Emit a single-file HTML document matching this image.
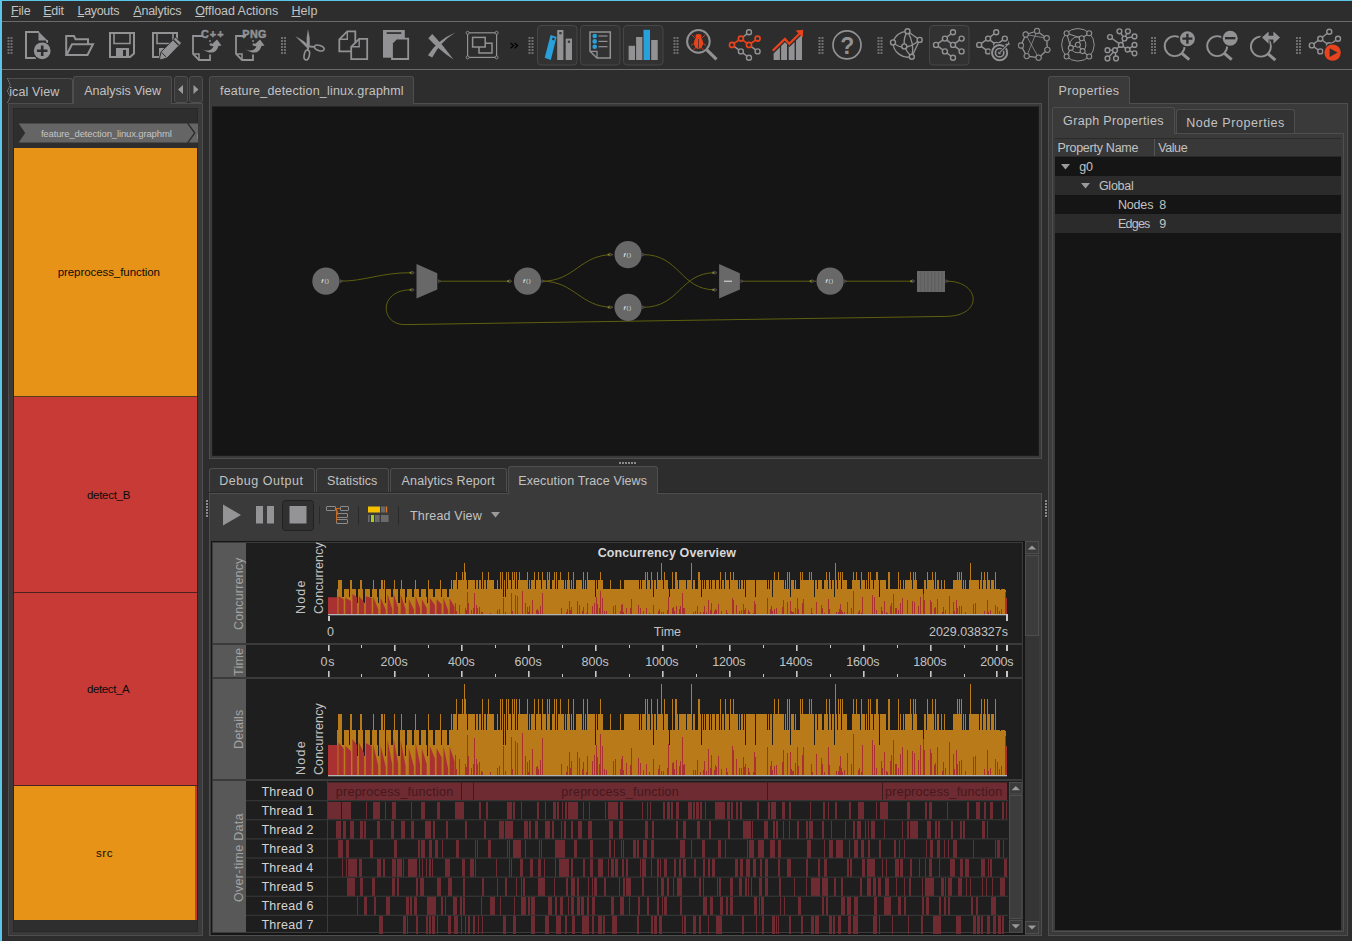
<!DOCTYPE html><html><head><meta charset="utf-8"><title>Flow Graph Analyzer</title><style>
*{box-sizing:border-box}
html,body{margin:0;padding:0}
body{width:1352px;height:941px;overflow:hidden;background:#2d2d2d;font-family:"Liberation Sans",sans-serif;font-size:13px;color:#c2c2c2;position:relative}
.abs{position:absolute}
.t{position:absolute;white-space:nowrap;line-height:16px}
u{text-decoration:underline;text-underline-offset:1px}
.tab{position:absolute;border:1px solid #4e4e4e;border-bottom:none;border-radius:3px 3px 0 0;background:#333333}
.tab.sel{background:#3a3a3a}
.pane{position:absolute;border:1px solid #4e4e4e;background:#3a3a3a}
.dark{position:absolute;background:#151515;border:1px solid #101010}
svg{position:absolute;overflow:visible}
.rot{position:absolute;transform-origin:0 0;transform:rotate(-90deg);white-space:nowrap;line-height:14px}
</style></head><body>
<!-- frame -->

<div class="abs" style="left:0;top:0;width:2px;height:941px;background:#5cc6e8"></div>
<div class="abs" style="left:0;top:0;width:1352px;height:1px;background:#5cc6e8"></div>
<div class="abs" style="left:2px;top:21px;width:1350px;height:1px;background:#6a6a6a"></div>
<div class="abs" style="left:2px;top:69px;width:1350px;height:1px;background:#6a6a6a"></div>

<!-- menubar -->
<div class="t" style="left:11.10px;top:2.67px;font-size:12.5px;letter-spacing:-0.217px;"><u>F</u>ile</div><div class="t" style="left:43.30px;top:2.67px;font-size:12.5px;letter-spacing:-0.275px;"><u>E</u>dit</div><div class="t" style="left:77.50px;top:2.67px;font-size:12.5px;letter-spacing:-0.312px;"><u>L</u>ayouts</div><div class="t" style="left:133.30px;top:2.67px;font-size:12.5px;letter-spacing:-0.228px;"><u>A</u>nalytics</div><div class="t" style="left:195.20px;top:2.67px;font-size:12.5px;letter-spacing:-0.057px;"><u>O</u>ffload Actions</div><div class="t" style="left:291.50px;top:2.67px;font-size:12.5px;letter-spacing:0.050px;"><u>H</u>elp</div>
<!-- toolbar -->
<svg style="left:0;top:0" width="1352" height="941"><rect x="7.5" y="37.0" width="2" height="2" fill="#6e6e6e"/><rect x="10.5" y="37.0" width="2" height="2" fill="#6e6e6e"/><rect x="7.5" y="40.0" width="2" height="2" fill="#6e6e6e"/><rect x="10.5" y="40.0" width="2" height="2" fill="#6e6e6e"/><rect x="7.5" y="43.0" width="2" height="2" fill="#6e6e6e"/><rect x="10.5" y="43.0" width="2" height="2" fill="#6e6e6e"/><rect x="7.5" y="46.0" width="2" height="2" fill="#6e6e6e"/><rect x="10.5" y="46.0" width="2" height="2" fill="#6e6e6e"/><rect x="7.5" y="49.0" width="2" height="2" fill="#6e6e6e"/><rect x="10.5" y="49.0" width="2" height="2" fill="#6e6e6e"/><rect x="7.5" y="52.0" width="2" height="2" fill="#6e6e6e"/><rect x="10.5" y="52.0" width="2" height="2" fill="#6e6e6e"/><rect x="281.0" y="37.0" width="2" height="2" fill="#6e6e6e"/><rect x="284.0" y="37.0" width="2" height="2" fill="#6e6e6e"/><rect x="281.0" y="40.0" width="2" height="2" fill="#6e6e6e"/><rect x="284.0" y="40.0" width="2" height="2" fill="#6e6e6e"/><rect x="281.0" y="43.0" width="2" height="2" fill="#6e6e6e"/><rect x="284.0" y="43.0" width="2" height="2" fill="#6e6e6e"/><rect x="281.0" y="46.0" width="2" height="2" fill="#6e6e6e"/><rect x="284.0" y="46.0" width="2" height="2" fill="#6e6e6e"/><rect x="281.0" y="49.0" width="2" height="2" fill="#6e6e6e"/><rect x="284.0" y="49.0" width="2" height="2" fill="#6e6e6e"/><rect x="281.0" y="52.0" width="2" height="2" fill="#6e6e6e"/><rect x="284.0" y="52.0" width="2" height="2" fill="#6e6e6e"/><rect x="528.5" y="37.0" width="2" height="2" fill="#6e6e6e"/><rect x="531.5" y="37.0" width="2" height="2" fill="#6e6e6e"/><rect x="528.5" y="40.0" width="2" height="2" fill="#6e6e6e"/><rect x="531.5" y="40.0" width="2" height="2" fill="#6e6e6e"/><rect x="528.5" y="43.0" width="2" height="2" fill="#6e6e6e"/><rect x="531.5" y="43.0" width="2" height="2" fill="#6e6e6e"/><rect x="528.5" y="46.0" width="2" height="2" fill="#6e6e6e"/><rect x="531.5" y="46.0" width="2" height="2" fill="#6e6e6e"/><rect x="528.5" y="49.0" width="2" height="2" fill="#6e6e6e"/><rect x="531.5" y="49.0" width="2" height="2" fill="#6e6e6e"/><rect x="528.5" y="52.0" width="2" height="2" fill="#6e6e6e"/><rect x="531.5" y="52.0" width="2" height="2" fill="#6e6e6e"/><rect x="673.5" y="37.0" width="2" height="2" fill="#6e6e6e"/><rect x="676.5" y="37.0" width="2" height="2" fill="#6e6e6e"/><rect x="673.5" y="40.0" width="2" height="2" fill="#6e6e6e"/><rect x="676.5" y="40.0" width="2" height="2" fill="#6e6e6e"/><rect x="673.5" y="43.0" width="2" height="2" fill="#6e6e6e"/><rect x="676.5" y="43.0" width="2" height="2" fill="#6e6e6e"/><rect x="673.5" y="46.0" width="2" height="2" fill="#6e6e6e"/><rect x="676.5" y="46.0" width="2" height="2" fill="#6e6e6e"/><rect x="673.5" y="49.0" width="2" height="2" fill="#6e6e6e"/><rect x="676.5" y="49.0" width="2" height="2" fill="#6e6e6e"/><rect x="673.5" y="52.0" width="2" height="2" fill="#6e6e6e"/><rect x="676.5" y="52.0" width="2" height="2" fill="#6e6e6e"/><rect x="818.5" y="37.0" width="2" height="2" fill="#6e6e6e"/><rect x="821.5" y="37.0" width="2" height="2" fill="#6e6e6e"/><rect x="818.5" y="40.0" width="2" height="2" fill="#6e6e6e"/><rect x="821.5" y="40.0" width="2" height="2" fill="#6e6e6e"/><rect x="818.5" y="43.0" width="2" height="2" fill="#6e6e6e"/><rect x="821.5" y="43.0" width="2" height="2" fill="#6e6e6e"/><rect x="818.5" y="46.0" width="2" height="2" fill="#6e6e6e"/><rect x="821.5" y="46.0" width="2" height="2" fill="#6e6e6e"/><rect x="818.5" y="49.0" width="2" height="2" fill="#6e6e6e"/><rect x="821.5" y="49.0" width="2" height="2" fill="#6e6e6e"/><rect x="818.5" y="52.0" width="2" height="2" fill="#6e6e6e"/><rect x="821.5" y="52.0" width="2" height="2" fill="#6e6e6e"/><rect x="877.5" y="37.0" width="2" height="2" fill="#6e6e6e"/><rect x="880.5" y="37.0" width="2" height="2" fill="#6e6e6e"/><rect x="877.5" y="40.0" width="2" height="2" fill="#6e6e6e"/><rect x="880.5" y="40.0" width="2" height="2" fill="#6e6e6e"/><rect x="877.5" y="43.0" width="2" height="2" fill="#6e6e6e"/><rect x="880.5" y="43.0" width="2" height="2" fill="#6e6e6e"/><rect x="877.5" y="46.0" width="2" height="2" fill="#6e6e6e"/><rect x="880.5" y="46.0" width="2" height="2" fill="#6e6e6e"/><rect x="877.5" y="49.0" width="2" height="2" fill="#6e6e6e"/><rect x="880.5" y="49.0" width="2" height="2" fill="#6e6e6e"/><rect x="877.5" y="52.0" width="2" height="2" fill="#6e6e6e"/><rect x="880.5" y="52.0" width="2" height="2" fill="#6e6e6e"/><rect x="1151.0" y="37.0" width="2" height="2" fill="#6e6e6e"/><rect x="1154.0" y="37.0" width="2" height="2" fill="#6e6e6e"/><rect x="1151.0" y="40.0" width="2" height="2" fill="#6e6e6e"/><rect x="1154.0" y="40.0" width="2" height="2" fill="#6e6e6e"/><rect x="1151.0" y="43.0" width="2" height="2" fill="#6e6e6e"/><rect x="1154.0" y="43.0" width="2" height="2" fill="#6e6e6e"/><rect x="1151.0" y="46.0" width="2" height="2" fill="#6e6e6e"/><rect x="1154.0" y="46.0" width="2" height="2" fill="#6e6e6e"/><rect x="1151.0" y="49.0" width="2" height="2" fill="#6e6e6e"/><rect x="1154.0" y="49.0" width="2" height="2" fill="#6e6e6e"/><rect x="1151.0" y="52.0" width="2" height="2" fill="#6e6e6e"/><rect x="1154.0" y="52.0" width="2" height="2" fill="#6e6e6e"/><rect x="1296.0" y="37.0" width="2" height="2" fill="#6e6e6e"/><rect x="1299.0" y="37.0" width="2" height="2" fill="#6e6e6e"/><rect x="1296.0" y="40.0" width="2" height="2" fill="#6e6e6e"/><rect x="1299.0" y="40.0" width="2" height="2" fill="#6e6e6e"/><rect x="1296.0" y="43.0" width="2" height="2" fill="#6e6e6e"/><rect x="1299.0" y="43.0" width="2" height="2" fill="#6e6e6e"/><rect x="1296.0" y="46.0" width="2" height="2" fill="#6e6e6e"/><rect x="1299.0" y="46.0" width="2" height="2" fill="#6e6e6e"/><rect x="1296.0" y="49.0" width="2" height="2" fill="#6e6e6e"/><rect x="1299.0" y="49.0" width="2" height="2" fill="#6e6e6e"/><rect x="1296.0" y="52.0" width="2" height="2" fill="#6e6e6e"/><rect x="1299.0" y="52.0" width="2" height="2" fill="#6e6e6e"/><path d="M39,32 H26 V58 H36 M47,40 V43" fill="none" stroke="#929295" stroke-width="2" stroke-linejoin="miter"/><path d="M38.5,31.5 L47.5,40.5 H38.5 Z" fill="#929295"/><circle cx="42.2" cy="50.8" r="9.6" fill="#2d2d2d"/><circle cx="42.2" cy="50.8" r="8.4" fill="#929295"/><path d="M42.2,45.5 V56.1 M36.9,50.8 H47.5" stroke="#2d2d2d" stroke-width="2.6" fill="none"/><path d="M66.2,55 V36 H74 L75.5,39.2 H88 V44" fill="none" stroke="#929295" stroke-width="2"/><path d="M66.5,55 L72,44.2 H93 L87.5,55 Z" fill="none" stroke="#929295" stroke-width="2"/><path d="M110,33 H134 V53.5 L130,57 H110 Z" fill="none" stroke="#929295" stroke-width="2"/><path d="M114,33 V43.5 H130 V33" fill="none" stroke="#929295" stroke-width="1.6"/><rect x="116" y="48" width="13" height="9" fill="#929295"/><rect x="123" y="50" width="3" height="6" fill="#2d2d2d"/><g clip-path="url(#csa)"><path d="M153,33 H177 V53.5 L173,57 H153 Z" fill="none" stroke="#929295" stroke-width="2"/><path d="M157,33 V43.5 H173 V33" fill="none" stroke="#929295" stroke-width="1.6"/><rect x="159" y="48" width="13" height="9" fill="#929295"/><rect x="166" y="50" width="3" height="6" fill="#2d2d2d"/></g><defs><clipPath id="csa"><path d="M150,30 H182 V36 L158,60 H150 Z M172,62 L182,50 V62 Z"/></clipPath></defs><path d="M159.6,58.2 L161,52 L175.5,37.2 L181.6,43 L167,58 L160.4,60 Z" fill="#929295" stroke="#2d2d2d" stroke-width="1"/><path d="M173.5,40 L178.5,45" stroke="#2d2d2d" stroke-width="1.2"/><path d="M161.6,52.5 L166,56.8" stroke="#2d2d2d" stroke-width="1"/><path d="M203,36 H193 V54 L199,60 H210 V54.5" fill="none" stroke="#929295" stroke-width="1.8"/><path d="M193,54 H199 V60" fill="none" stroke="#929295" stroke-width="1.5"/><path d="M202.0,49 Q210.0,53 213.5,46.5 L210.5,45.5 L217.0,39.5 L221.5,45.5 L218.5,46 Q215.0,57.5 202.0,49 Z" fill="#929295"/><circle cx="210.0" cy="41" r="0.9" fill="#929295"/><circle cx="210.8" cy="44.5" r="1.2" fill="#929295"/><text x="224.6" y="37.6" font-family="Liberation Sans, sans-serif" font-weight="bold" font-size="10.8" letter-spacing="1.1" fill="#929295" stroke="#929295" stroke-width="0.45" text-anchor="end">C++</text><path d="M246,36 H236 V54 L242,60 H253 V54.5" fill="none" stroke="#929295" stroke-width="1.8"/><path d="M236,54 H242 V60" fill="none" stroke="#929295" stroke-width="1.5"/><path d="M245.0,49 Q253.0,53 256.5,46.5 L253.5,45.5 L260.0,39.5 L264.5,45.5 L261.5,46 Q258.0,57.5 245.0,49 Z" fill="#929295"/><circle cx="253.0" cy="41" r="0.9" fill="#929295"/><circle cx="253.8" cy="44.5" r="1.2" fill="#929295"/><text x="266.9" y="37.6" font-family="Liberation Sans, sans-serif" font-weight="bold" font-size="10.8" letter-spacing="0.4" fill="#929295" stroke="#929295" stroke-width="0.45" text-anchor="end">PNG</text><path d="M308,29 Q310.5,38 309.8,47.5 L306.8,47 Q305.8,38 308,29 Z" fill="#929295"/><path d="M295.3,36.2 Q303,39.5 310,46.8 L307.6,48.4 Q301,42 295.3,36.2 Z" fill="#929295"/><ellipse cx="306.8" cy="55" rx="2.6" ry="5" transform="rotate(12 306.8 55)" fill="none" stroke="#929295" stroke-width="1.6"/><ellipse cx="319.3" cy="48" rx="5" ry="2.6" transform="rotate(18 319.3 48)" fill="none" stroke="#929295" stroke-width="1.6"/><path d="M308.3,47 L307.6,50.5 M310,46.5 L314.5,46.8" stroke="#929295" stroke-width="1.8"/><path d="M347.3,31.3 H355.3 V51.3 H339.3 V39.3 Z" fill="#2d2d2d" stroke="#929295" stroke-width="1.8"/><path d="M347.3,31.3 V39.3 H339.3" fill="none" stroke="#929295" stroke-width="1.4"/><path d="M359.2,38.8 H367.2 V59.1 H351.2 V46.8 Z" fill="#2d2d2d" stroke="#929295" stroke-width="1.8"/><path d="M359.2,38.8 V46.8 H351.2" fill="none" stroke="#929295" stroke-width="1.4"/><rect x="383" y="30" width="21.8" height="27.7" fill="#929295"/><rect x="386.7" y="32.2" width="14.6" height="1.7" fill="#2d2d2d"/><path d="M397.5,38.6 H408.2 V59 H392 V44 Z" fill="#2d2d2d" stroke="#929295" stroke-width="1.8"/><path d="M397.5,38.6 V44 H392 Z" fill="#2d2d2d"/><path d="M391,38 H398 L391,45 Z" fill="#929295"/><path d="M428.3,38.3 L432.3,34 Q444,46 453.5,59.6 Q439,50 428.3,38.3 Z" fill="#929295"/><path d="M428,55.3 L432.2,57.6 Q440,42 455.3,32.4 Q437,40 428,55.3 Z" fill="#929295"/><rect x="467.6" y="32.8" width="29" height="24.6" fill="none" stroke="#929295" stroke-width="1.2"/><circle cx="467.6" cy="32.8" r="1.5" fill="#2d2d2d" stroke="#929295" stroke-width="0.9"/><circle cx="496.6" cy="32.8" r="1.5" fill="#2d2d2d" stroke="#929295" stroke-width="0.9"/><circle cx="467.6" cy="57.4" r="1.5" fill="#2d2d2d" stroke="#929295" stroke-width="0.9"/><circle cx="496.6" cy="57.4" r="1.5" fill="#2d2d2d" stroke="#929295" stroke-width="0.9"/><rect x="479" y="43.2" width="13" height="9.8" fill="none" stroke="#929295" stroke-width="1.5"/><rect x="472.6" y="37.4" width="12.6" height="9.6" fill="#2d2d2d" stroke="#929295" stroke-width="1.5"/><path d="M510.6,43 l3,2.6 l-3,2.6 M514.6,43 l3,2.6 l-3,2.6" fill="none" stroke="#000" stroke-width="1.3"/><rect x="537.5" y="25.5" width="39.5" height="39.5" rx="3.5" fill="#323232" stroke="#474747"/><rect x="580.5" y="25.5" width="39.5" height="39.5" rx="3.5" fill="#323232" stroke="#474747"/><rect x="623.5" y="25.5" width="39.5" height="39.5" rx="3.5" fill="#323232" stroke="#474747"/><path d="M550.6,35 L556.6,36.9 L550.8,60 L544.7,57.8 Z" fill="#27a0dc"/><rect x="552.2" y="37.8" width="2.4" height="2.4" fill="#2a3a44" transform="rotate(15 553.4 39)"/><rect x="557.2" y="30" width="6.2" height="30" fill="#929295"/><rect x="559.3" y="32" width="2.3" height="2.3" fill="#3a3a3a"/><rect x="565.7" y="38.6" width="6.3" height="21.4" fill="#929295"/><rect x="567.8" y="40.6" width="2.3" height="2.3" fill="#3a3a3a"/><path d="M590,32 H610.3 V58 H597 L590,51.3 Z" fill="none" stroke="#929295" stroke-width="1.5"/><path d="M590,51.3 H597 V58" fill="none" stroke="#929295" stroke-width="1.3"/><circle cx="594.7" cy="36.0" r="2.3" fill="#27a0dc"/><rect x="598.5" y="35.4" width="9" height="1.2" fill="#929295"/><circle cx="594.7" cy="41.4" r="2.3" fill="#27a0dc"/><rect x="598.5" y="40.8" width="9" height="1.2" fill="#929295"/><circle cx="594.7" cy="46.7" r="2.3" fill="#27a0dc"/><rect x="598.5" y="46.1" width="9" height="1.2" fill="#929295"/><rect x="628.6" y="45.8" width="6.4" height="14.2" fill="#929295"/><rect x="636.1" y="37" width="6.3" height="23" fill="#929295"/><rect x="643.5" y="29.8" width="6.5" height="30.2" fill="#27a0dc"/><rect x="651.2" y="40" width="6.5" height="20" fill="#929295"/><circle cx="698.4" cy="41.4" r="11.3" fill="none" stroke="#929295" stroke-width="2"/><path d="M706.8,49.8 L716.5,59.3" stroke="#929295" stroke-width="3.2"/><ellipse cx="698.5" cy="43" rx="4.6" ry="6" fill="#e8431c"/><ellipse cx="698.5" cy="36.2" rx="3" ry="2.2" fill="#e8431c"/><rect x="698.2" y="39" width="0.7" height="9.5" fill="#2d2d2d"/><path d="M695.5,38.5 L691.5,34.5 M701.5,38.5 L705.5,34.5 M694.5,43 L691,45.5 M702.5,43 L706,45.5 M695.5,47.5 L693,51 M701.5,47.5 L704,51" stroke="#e8431c" stroke-width="0.8" fill="none"/><path d="M749.0,32.2 L740.9,38.6" stroke="#929295" stroke-width="1.4"/><path d="M740.9,38.6 L732.0,44.9" stroke="#e8431c" stroke-width="1.7"/><path d="M732.0,44.9 L740.9,51.4" stroke="#929295" stroke-width="1.4"/><path d="M740.9,51.4 L749.0,57.7" stroke="#929295" stroke-width="1.4"/><path d="M740.9,38.6 L749.0,44.9" stroke="#e8431c" stroke-width="1.7"/><path d="M749.0,44.9 L757.6,38.6" stroke="#e8431c" stroke-width="1.7"/><path d="M749.0,44.9 L757.6,51.4" stroke="#929295" stroke-width="1.4"/><circle cx="749.0" cy="32.2" r="2.5" fill="#2d2d2d" stroke="#929295" stroke-width="1.4"/><circle cx="740.9" cy="38.6" r="2.5" fill="#2d2d2d" stroke="#e8431c" stroke-width="1.7"/><circle cx="757.6" cy="38.6" r="2.5" fill="#2d2d2d" stroke="#e8431c" stroke-width="1.7"/><circle cx="732.0" cy="44.9" r="2.5" fill="#2d2d2d" stroke="#e8431c" stroke-width="1.7"/><circle cx="749.0" cy="44.9" r="2.5" fill="#2d2d2d" stroke="#e8431c" stroke-width="1.7"/><circle cx="740.9" cy="51.4" r="2.5" fill="#2d2d2d" stroke="#929295" stroke-width="1.4"/><circle cx="757.6" cy="51.4" r="2.5" fill="#2d2d2d" stroke="#929295" stroke-width="1.4"/><circle cx="749.0" cy="57.7" r="2.5" fill="#2d2d2d" stroke="#929295" stroke-width="1.4"/><path d="M773.6,53.5 L779.9,47.3 V60 H773.6 Z M781.1,46 L785,42.3 L787,44.3 V60 H781.1 Z M788.7,46 L789.5,47 L794.6,42 V60 H788.7 Z M796,40.5 L802,34.5 V60 H796 Z" fill="#929295"/><path d="M772.7,50.8 L784.9,38.9 L789.3,43.9 L799.5,33.7" fill="none" stroke="#e8431c" stroke-width="2.3"/><path d="M803.2,29.8 L795.6,30.4 L802.8,37.4 Z" fill="#e8431c"/><circle cx="847" cy="44.9" r="14" fill="none" stroke="#929295" stroke-width="1.7"/><text x="847.2" y="53.8" font-family="Liberation Sans, sans-serif" font-weight="bold" font-size="23" fill="#929295" text-anchor="middle">?</text><g fill="none" stroke="#929295" stroke-width="1.3"><path d="M907.5,31.3 A14.5,14.5 0 0 0 893,42.4 A15,15 0 0 0 911.8,56.7"/><path d="M907.5,31.3 L919.7,39.9 L911.8,56.7"/><path d="M907.5,31.3 Q899,45 911.8,56.7"/><path d="M907.5,31.3 Q915,44 911.8,56.7"/><path d="M893,42.4 Q904,53 919.7,39.9"/></g><circle cx="907.5" cy="31.3" r="2.5" fill="#2d2d2d" stroke="#929295" stroke-width="1.4"/><circle cx="893.0" cy="42.4" r="2.5" fill="#2d2d2d" stroke="#929295" stroke-width="1.4"/><circle cx="919.7" cy="39.9" r="2.5" fill="#2d2d2d" stroke="#929295" stroke-width="1.4"/><circle cx="904.3" cy="46.4" r="2.5" fill="#2d2d2d" stroke="#929295" stroke-width="1.4"/><circle cx="911.8" cy="56.7" r="2.5" fill="#2d2d2d" stroke="#929295" stroke-width="1.4"/><rect x="929.5" y="25.5" width="39.5" height="39.5" rx="3.5" fill="#323232" stroke="#474747"/><path d="M953.0,32.2 L944.9,38.6" stroke="#929295" stroke-width="1.4"/><path d="M944.9,38.6 L936.0,44.9" stroke="#929295" stroke-width="1.4"/><path d="M936.0,44.9 L944.9,51.4" stroke="#929295" stroke-width="1.4"/><path d="M944.9,51.4 L953.0,57.7" stroke="#929295" stroke-width="1.4"/><path d="M944.9,38.6 L953.0,44.9" stroke="#929295" stroke-width="1.4"/><path d="M953.0,44.9 L961.6,38.6" stroke="#929295" stroke-width="1.4"/><path d="M953.0,44.9 L961.6,51.4" stroke="#929295" stroke-width="1.4"/><circle cx="953.0" cy="32.2" r="2.5" fill="#2d2d2d" stroke="#929295" stroke-width="1.4"/><circle cx="944.9" cy="38.6" r="2.5" fill="#2d2d2d" stroke="#929295" stroke-width="1.4"/><circle cx="961.6" cy="38.6" r="2.5" fill="#2d2d2d" stroke="#929295" stroke-width="1.4"/><circle cx="936.0" cy="44.9" r="2.5" fill="#2d2d2d" stroke="#929295" stroke-width="1.4"/><circle cx="953.0" cy="44.9" r="2.5" fill="#2d2d2d" stroke="#929295" stroke-width="1.4"/><circle cx="944.9" cy="51.4" r="2.5" fill="#2d2d2d" stroke="#929295" stroke-width="1.4"/><circle cx="961.6" cy="51.4" r="2.5" fill="#2d2d2d" stroke="#929295" stroke-width="1.4"/><circle cx="953.0" cy="57.7" r="2.5" fill="#2d2d2d" stroke="#929295" stroke-width="1.4"/><path d="M996.2,32.2 L988.1,38.6" stroke="#929295" stroke-width="1.4"/><path d="M988.1,38.6 L979.2,44.9" stroke="#929295" stroke-width="1.4"/><path d="M979.2,44.9 L988.1,51.4" stroke="#929295" stroke-width="1.4"/><path d="M988.1,38.6 L996.2,44.9" stroke="#929295" stroke-width="1.4"/><path d="M996.2,44.9 L1004.8,38.6" stroke="#929295" stroke-width="1.4"/><circle cx="996.2" cy="32.2" r="2.5" fill="#2d2d2d" stroke="#929295" stroke-width="1.4"/><circle cx="988.1" cy="38.6" r="2.5" fill="#2d2d2d" stroke="#929295" stroke-width="1.4"/><circle cx="1004.8" cy="38.6" r="2.5" fill="#2d2d2d" stroke="#929295" stroke-width="1.4"/><circle cx="979.2" cy="44.9" r="2.5" fill="#2d2d2d" stroke="#929295" stroke-width="1.4"/><circle cx="996.2" cy="44.9" r="2.5" fill="#2d2d2d" stroke="#929295" stroke-width="1.4"/><circle cx="988.1" cy="51.4" r="2.5" fill="#2d2d2d" stroke="#929295" stroke-width="1.4"/><circle cx="999.6" cy="52.7" r="9.6" fill="#2d2d2d"/><circle cx="999.6" cy="52.7" r="7.6" fill="none" stroke="#929295" stroke-width="2"/><circle cx="999.6" cy="52.7" r="4.2" fill="none" stroke="#929295" stroke-width="1.7"/><circle cx="999.6" cy="52.7" r="1.5" fill="#929295"/><path d="M999.6,52.7 L1007,45.3" stroke="#2d2d2d" stroke-width="2.6"/><path d="M999.6,52.7 L1007,45.3" stroke="#929295" stroke-width="1.2"/><path d="M1005,44 l3.2,-0.6 l-0.2,-3 l2,3.8 l-3.6,1.8 z" fill="#929295"/><path d="M1037.0,31.0 L1025.7,34.5" stroke="#929295" stroke-width="1.3"/><path d="M1025.7,34.5 L1021.0,45.5" stroke="#929295" stroke-width="1.3"/><path d="M1021.0,45.5 L1026.7,56.1" stroke="#929295" stroke-width="1.3"/><path d="M1026.7,56.1 L1038.6,57.7" stroke="#929295" stroke-width="1.3"/><path d="M1038.6,57.7 L1047.4,49.8" stroke="#929295" stroke-width="1.3"/><path d="M1047.4,49.8 L1046.7,38.2" stroke="#929295" stroke-width="1.3"/><path d="M1046.7,38.2 L1037.0,31.0" stroke="#929295" stroke-width="1.3"/><circle cx="1037.0" cy="31.0" r="2.5" fill="#2d2d2d" stroke="#929295" stroke-width="1.3"/><circle cx="1025.7" cy="34.5" r="2.5" fill="#2d2d2d" stroke="#929295" stroke-width="1.3"/><circle cx="1046.7" cy="38.2" r="2.5" fill="#2d2d2d" stroke="#929295" stroke-width="1.3"/><circle cx="1021.0" cy="45.5" r="2.5" fill="#2d2d2d" stroke="#929295" stroke-width="1.3"/><circle cx="1047.4" cy="49.8" r="2.5" fill="#2d2d2d" stroke="#929295" stroke-width="1.3"/><circle cx="1026.7" cy="56.1" r="2.5" fill="#2d2d2d" stroke="#929295" stroke-width="1.3"/><circle cx="1038.6" cy="57.7" r="2.5" fill="#2d2d2d" stroke="#929295" stroke-width="1.3"/><path d="M1025.7,34.5 L1038.6,57.7" stroke="#929295" stroke-width="0.8"/><path d="M1037.0,31.0 L1026.7,56.1" stroke="#929295" stroke-width="0.8"/><path d="M1025.7,34.5 L1046.7,38.2" stroke="#929295" stroke-width="0.8"/><circle cx="1037.0" cy="31.0" r="2.5" fill="#2d2d2d" stroke="#929295" stroke-width="0.8"/><circle cx="1025.7" cy="34.5" r="2.5" fill="#2d2d2d" stroke="#929295" stroke-width="0.8"/><circle cx="1046.7" cy="38.2" r="2.5" fill="#2d2d2d" stroke="#929295" stroke-width="0.8"/><circle cx="1021.0" cy="45.5" r="2.5" fill="#2d2d2d" stroke="#929295" stroke-width="0.8"/><circle cx="1047.4" cy="49.8" r="2.5" fill="#2d2d2d" stroke="#929295" stroke-width="0.8"/><circle cx="1026.7" cy="56.1" r="2.5" fill="#2d2d2d" stroke="#929295" stroke-width="0.8"/><circle cx="1038.6" cy="57.7" r="2.5" fill="#2d2d2d" stroke="#929295" stroke-width="0.8"/><circle cx="1077.9" cy="44.8" r="16.3" fill="none" stroke="#929295" stroke-width="1"/><circle cx="1077.9" cy="44.8" r="8" fill="none" stroke="#929295" stroke-width="1"/><path d="M1077.9,44.8 L1081.7,38.2" stroke="#929295" stroke-width="1.1"/><path d="M1077.9,44.8 L1070.8,47.9" stroke="#929295" stroke-width="1.1"/><path d="M1077.9,44.8 L1082.6,51.1" stroke="#929295" stroke-width="1.1"/><path d="M1066.6,33.2 L1081.7,38.2" stroke="#929295" stroke-width="1.1"/><path d="M1066.6,33.2 L1070.8,47.9" stroke="#929295" stroke-width="1.1"/><path d="M1081.7,38.2 L1089.2,33.2" stroke="#929295" stroke-width="1.1"/><path d="M1070.8,47.9 L1066.6,56.5" stroke="#929295" stroke-width="1.1"/><path d="M1082.6,51.1 L1089.2,56.5" stroke="#929295" stroke-width="1.1"/><circle cx="1066.6" cy="33.2" r="2.5" fill="#2d2d2d" stroke="#929295" stroke-width="1.1"/><circle cx="1089.2" cy="33.2" r="2.5" fill="#2d2d2d" stroke="#929295" stroke-width="1.1"/><circle cx="1081.7" cy="38.2" r="2.5" fill="#2d2d2d" stroke="#929295" stroke-width="1.1"/><circle cx="1077.9" cy="44.8" r="2.5" fill="#2d2d2d" stroke="#929295" stroke-width="1.1"/><circle cx="1070.8" cy="47.9" r="2.5" fill="#2d2d2d" stroke="#929295" stroke-width="1.1"/><circle cx="1082.6" cy="51.1" r="2.5" fill="#2d2d2d" stroke="#929295" stroke-width="1.1"/><circle cx="1066.6" cy="56.5" r="2.5" fill="#2d2d2d" stroke="#929295" stroke-width="1.1"/><circle cx="1089.2" cy="56.5" r="2.5" fill="#2d2d2d" stroke="#929295" stroke-width="1.1"/><path d="M1120.9,44.9 L1110.0,37.0" stroke="#929295" stroke-width="1.4"/><path d="M1120.9,44.9 L1124.5,38.5" stroke="#929295" stroke-width="1.4"/><path d="M1124.5,38.5 L1119.4,31.3" stroke="#929295" stroke-width="1.4"/><path d="M1124.5,38.5 L1127.9,31.3" stroke="#929295" stroke-width="1.4"/><path d="M1124.5,38.5 L1134.5,36.4" stroke="#929295" stroke-width="1.4"/><path d="M1120.9,44.9 L1127.6,49.6" stroke="#929295" stroke-width="1.4"/><path d="M1127.6,49.6 L1134.5,44.9" stroke="#929295" stroke-width="1.4"/><path d="M1127.6,49.6 L1134.5,53.3" stroke="#929295" stroke-width="1.4"/><path d="M1120.9,44.9 L1115.0,50.2" stroke="#929295" stroke-width="1.4"/><path d="M1115.0,50.2 L1107.5,50.2" stroke="#929295" stroke-width="1.4"/><path d="M1115.0,50.2 L1107.5,58.4" stroke="#929295" stroke-width="1.4"/><path d="M1115.0,50.2 L1116.0,58.4" stroke="#929295" stroke-width="1.4"/><circle cx="1120.9" cy="44.9" r="2.4" fill="#2d2d2d" stroke="#929295" stroke-width="1.4"/><circle cx="1110.0" cy="37.0" r="2.4" fill="#2d2d2d" stroke="#929295" stroke-width="1.4"/><circle cx="1124.5" cy="38.5" r="2.4" fill="#2d2d2d" stroke="#929295" stroke-width="1.4"/><circle cx="1119.4" cy="31.3" r="2.4" fill="#2d2d2d" stroke="#929295" stroke-width="1.4"/><circle cx="1127.9" cy="31.3" r="2.4" fill="#2d2d2d" stroke="#929295" stroke-width="1.4"/><circle cx="1134.5" cy="36.4" r="2.4" fill="#2d2d2d" stroke="#929295" stroke-width="1.4"/><circle cx="1127.6" cy="49.6" r="2.4" fill="#2d2d2d" stroke="#929295" stroke-width="1.4"/><circle cx="1134.5" cy="44.9" r="2.4" fill="#2d2d2d" stroke="#929295" stroke-width="1.4"/><circle cx="1134.5" cy="53.3" r="2.4" fill="#2d2d2d" stroke="#929295" stroke-width="1.4"/><circle cx="1115.0" cy="50.2" r="2.4" fill="#2d2d2d" stroke="#929295" stroke-width="1.4"/><circle cx="1107.5" cy="50.2" r="2.4" fill="#2d2d2d" stroke="#929295" stroke-width="1.4"/><circle cx="1107.5" cy="58.4" r="2.4" fill="#2d2d2d" stroke="#929295" stroke-width="1.4"/><circle cx="1116.0" cy="58.4" r="2.4" fill="#2d2d2d" stroke="#929295" stroke-width="1.4"/><circle cx="1174.7" cy="46.1" r="10" fill="none" stroke="#929295" stroke-width="1.9"/><path d="M1181.9,53.3 L1189.2,59.6" stroke="#929295" stroke-width="3"/><circle cx="1187.4" cy="38.7" r="9" fill="#2d2d2d"/><circle cx="1187.4" cy="38.7" r="7.5" fill="#929295"/><path d="M1187.4,33.7 V43.7 M1182.4,38.7 H1192.4" stroke="#2d2d2d" stroke-width="2.3"/><circle cx="1217.2" cy="46.1" r="10" fill="none" stroke="#929295" stroke-width="1.9"/><path d="M1224.4,53.3 L1231.7,59.6" stroke="#929295" stroke-width="3"/><circle cx="1230.2" cy="38.2" r="9" fill="#2d2d2d"/><circle cx="1230.2" cy="38.2" r="7.5" fill="#929295"/><path d="M1225,38.2 H1235.4" stroke="#2d2d2d" stroke-width="2.3"/><circle cx="1260.9" cy="46.6" r="10" fill="none" stroke="#929295" stroke-width="1.9"/><path d="M1268.1,53.8 L1275.4,60.1" stroke="#929295" stroke-width="3"/><path d="M1259.5,37.6 L1269.5,29 V46.5 Z M1282.5,37.6 L1272.5,29 V46.5 Z" fill="#2d2d2d"/><path d="M1262,37.6 L1268.6,31.4 V35.8 H1273.4 V31.4 L1280,37.6 L1273.4,43.8 V39.6 H1268.6 V43.8 Z" fill="#929295"/><path d="M1329.3,31.7 L1320.3,38.7" stroke="#929295" stroke-width="1.4"/><path d="M1320.3,38.7 L1311.8,45.4" stroke="#929295" stroke-width="1.4"/><path d="M1311.8,45.4 L1320.3,51.4" stroke="#929295" stroke-width="1.4"/><path d="M1320.3,38.7 L1329.0,45.2" stroke="#929295" stroke-width="1.4"/><path d="M1329.0,45.2 L1338.0,38.7" stroke="#929295" stroke-width="1.4"/><circle cx="1329.3" cy="31.7" r="2.5" fill="#2d2d2d" stroke="#929295" stroke-width="1.4"/><circle cx="1320.3" cy="38.7" r="2.5" fill="#2d2d2d" stroke="#929295" stroke-width="1.4"/><circle cx="1338.0" cy="38.7" r="2.5" fill="#2d2d2d" stroke="#929295" stroke-width="1.4"/><circle cx="1311.8" cy="45.4" r="2.5" fill="#2d2d2d" stroke="#929295" stroke-width="1.4"/><circle cx="1320.3" cy="51.4" r="2.5" fill="#2d2d2d" stroke="#929295" stroke-width="1.4"/><circle cx="1329.0" cy="45.2" r="2.5" fill="#2d2d2d" stroke="#929295" stroke-width="1.4"/><circle cx="1332.6" cy="52.6" r="9.4" fill="#2d2d2d"/><circle cx="1332.6" cy="52.6" r="8.2" fill="#e8431c"/><path d="M1329.6,48.2 L1337.6,52.6 L1329.6,57 Z" fill="#2d2d2d"/></svg>
<!-- left -->

<div class="tab" style="left:7px;top:78px;width:66px;height:25px;overflow:hidden;border-left:none;border-radius:0 3px 0 0"><div class="t" style="left:2.15px;top:4.87px;font-size:12.5px;letter-spacing:0.138px;">ical View</div></div>
<svg style="left:6px;top:78px" width="8" height="26"><path d="M1,0 L4,7 L1,13 L4,19 L1,25" fill="none" stroke="#9a9a9a" stroke-width="1"/><path d="M0,0 L1,0 L4,7 L1,13 L4,19 L1,25 L0,25 Z" fill="#2d2d2d"/></svg>
<div class="pane" style="left:8px;top:103px;width:195px;height:833px"></div>
<div class="tab sel" style="left:73px;top:76px;width:99px;height:28px"><div class="t" style="left:10.30px;top:6.07px;font-size:12.5px;letter-spacing:-0.017px;">Analysis View</div></div>
<div class="abs" style="left:174px;top:76px;width:14px;height:27px;border:1px solid #4e4e4e;border-radius:3px;background:#383838"></div>
<div class="abs" style="left:189px;top:76px;width:14px;height:27px;border:1px solid #4e4e4e;border-radius:3px;background:#383838"></div>
<svg style="left:173px;top:77px" width="30" height="26"><path d="M10,8 L10,17 L5,12.5 Z M20.5,8 L20.5,17 L25.5,12.5 Z" fill="#9a9a9a"/></svg>
<div class="abs" style="left:13px;top:108px;width:185px;height:824px;background:#2e2e2e;border:1px solid #282828"></div>
<svg style="left:0;top:0" width="220" height="160"><path d="M18.7,123.5 L198,123.5 L198,142.5 L18.7,142.5 L25.2,133 Z" fill="#656565"/><path d="M187.6,123.2 L194.8,133 L187.6,142.8" fill="none" stroke="#2b2b2b" stroke-width="1.3"/><rect x="197" y="134" width="1" height="5" fill="#5a86b0"/></svg>
<div class="t" style="left:40.88px;top:126.01px;font-size:9.5px;letter-spacing:-0.143px;color:#c4c4c4;">feature_detection_linux.graphml</div>
<div class="abs" style="left:14px;top:148px;width:183px;height:249px;background:#e69318;border-bottom:1px solid #5a3a1a"></div>
<div class="abs" style="left:14px;top:397px;width:183px;height:196px;background:#c83a36;border-bottom:1px solid #4a2222"></div>
<div class="abs" style="left:14px;top:593px;width:183px;height:193px;background:#c83a36;border-bottom:1px solid #4a2222"></div>
<div class="abs" style="left:14px;top:786px;width:183px;height:134px;background:#c83a36"></div>
<div class="abs" style="left:14px;top:786px;width:181px;height:134px;background:#e69318"></div>
<div class="t" style="left:57.67px;top:263.62px;font-size:11.5px;letter-spacing:-0.069px;color:#0c0c0c;">preprocess_function</div>
<div class="t" style="left:86.92px;top:487.02px;font-size:11.5px;letter-spacing:-0.271px;color:#0c0c0c;">detect_B</div>
<div class="t" style="left:86.92px;top:681.02px;font-size:11.5px;letter-spacing:-0.361px;color:#0c0c0c;">detect_A</div>
<div class="t" style="left:95.95px;top:844.72px;font-size:11.5px;letter-spacing:0.562px;color:#0c0c0c;">src</div>

<!-- center -->

<div class="pane" style="left:209px;top:103px;width:833px;height:356px"></div>
<div class="tab sel" style="left:209px;top:76px;width:205px;height:28px"><div class="t" style="left:9.97px;top:5.57px;font-size:12.5px;letter-spacing:0.193px;">feature_detection_linux.graphml</div></div>
<div class="dark" style="left:212px;top:106px;width:827px;height:350px;border-color:#262626 #1c1c1c #1c1c1c #1c1c1c"></div>
<svg style="left:0;top:0" width="1352" height="941"><path d="M340,281.2 C365,281.2 380,272.7 411,272.7" fill="none" stroke="#5f5f10" stroke-width="1"/><path d="M439,281.2 L508,281.2" fill="none" stroke="#5f5f10" stroke-width="1"/><path d="M542,281.2 C575,281.2 580,254.6 613,254.6" fill="none" stroke="#5f5f10" stroke-width="1"/><path d="M542,281.2 C575,281.2 580,307.3 613,307.3" fill="none" stroke="#5f5f10" stroke-width="1"/><path d="M643,254.6 C680,254.6 680,289.8 715,289.8" fill="none" stroke="#5f5f10" stroke-width="1"/><path d="M643,307.3 C680,307.3 680,272.7 715,272.7" fill="none" stroke="#5f5f10" stroke-width="1"/><path d="M741,281.2 L816,281.2" fill="none" stroke="#5f5f10" stroke-width="1"/><path d="M845,281.2 L914,281.2" fill="none" stroke="#5f5f10" stroke-width="1"/><path d="M947,281.2 C980,281.2 984,316 946,316.4 L405,324.6 C380,325 378,290 411,289.8" fill="none" stroke="#5f5f10" stroke-width="1"/><circle cx="325.9" cy="281.2" r="13.6" fill="#686868"/><text x="325.5" y="283.4" font-size="6" fill="#dfe4ea" text-anchor="middle" font-family="Liberation Sans, sans-serif"><tspan font-weight="bold" font-style="italic">f</tspan><tspan dx="1.1" font-size="5.8" letter-spacing="0.7">()</tspan></text><circle cx="527.5" cy="281.2" r="13.6" fill="#686868"/><text x="527.1" y="283.4" font-size="6" fill="#dfe4ea" text-anchor="middle" font-family="Liberation Sans, sans-serif"><tspan font-weight="bold" font-style="italic">f</tspan><tspan dx="1.1" font-size="5.8" letter-spacing="0.7">()</tspan></text><circle cx="628.1" cy="254.6" r="13.6" fill="#686868"/><text x="627.7" y="256.8" font-size="6" fill="#dfe4ea" text-anchor="middle" font-family="Liberation Sans, sans-serif"><tspan font-weight="bold" font-style="italic">f</tspan><tspan dx="1.1" font-size="5.8" letter-spacing="0.7">()</tspan></text><circle cx="628.1" cy="307.3" r="13.6" fill="#686868"/><text x="627.7" y="309.5" font-size="6" fill="#dfe4ea" text-anchor="middle" font-family="Liberation Sans, sans-serif"><tspan font-weight="bold" font-style="italic">f</tspan><tspan dx="1.1" font-size="5.8" letter-spacing="0.7">()</tspan></text><circle cx="830.1" cy="281.2" r="13.6" fill="#686868"/><text x="829.7" y="283.4" font-size="6" fill="#dfe4ea" text-anchor="middle" font-family="Liberation Sans, sans-serif"><tspan font-weight="bold" font-style="italic">f</tspan><tspan dx="1.1" font-size="5.8" letter-spacing="0.7">()</tspan></text><path d="M416.5,263.9 L437.3,273.2 L437.3,289.5 L416.5,298.5 Z" fill="#686868"/><path d="M719.1,263.9 L739.9,273.2 L739.9,289.5 L719.1,298.5 Z" fill="#686868"/><rect x="724" y="280.7" width="8" height="1" fill="#e0e0e0"/><rect x="917" y="271" width="28" height="21" fill="#686868"/><rect x="920.5" y="271" width="0.8" height="21" fill="#5a5a5a"/><rect x="924.0" y="271" width="0.8" height="21" fill="#5a5a5a"/><rect x="927.5" y="271" width="0.8" height="21" fill="#5a5a5a"/><rect x="931.0" y="271" width="0.8" height="21" fill="#5a5a5a"/><rect x="934.5" y="271" width="0.8" height="21" fill="#5a5a5a"/><rect x="938.0" y="271" width="0.8" height="21" fill="#5a5a5a"/><rect x="941.5" y="271" width="0.8" height="21" fill="#5a5a5a"/><rect x="409.7" y="271.7" width="1.8" height="2" fill="#8a8420"/><path d="M411.8,271.1 l2.6,1.6 l-2.6,1.6 z" fill="#202020" stroke="#777" stroke-width="0.5"/><rect x="409.7" y="288.8" width="1.8" height="2" fill="#8a8420"/><path d="M411.8,288.2 l2.6,1.6 l-2.6,1.6 z" fill="#202020" stroke="#777" stroke-width="0.5"/><rect x="507.2" y="280.2" width="1.8" height="2" fill="#8a8420"/><path d="M509.3,279.6 l2.6,1.6 l-2.6,1.6 z" fill="#202020" stroke="#777" stroke-width="0.5"/><rect x="607.7" y="253.6" width="1.8" height="2" fill="#8a8420"/><path d="M609.8,253.0 l2.6,1.6 l-2.6,1.6 z" fill="#202020" stroke="#777" stroke-width="0.5"/><rect x="607.7" y="306.3" width="1.8" height="2" fill="#8a8420"/><path d="M609.8,305.7 l2.6,1.6 l-2.6,1.6 z" fill="#202020" stroke="#777" stroke-width="0.5"/><rect x="712.3" y="271.7" width="1.8" height="2" fill="#8a8420"/><path d="M714.4,271.1 l2.6,1.6 l-2.6,1.6 z" fill="#202020" stroke="#777" stroke-width="0.5"/><rect x="712.3" y="288.8" width="1.8" height="2" fill="#8a8420"/><path d="M714.4,288.2 l2.6,1.6 l-2.6,1.6 z" fill="#202020" stroke="#777" stroke-width="0.5"/><rect x="809.7" y="280.2" width="1.8" height="2" fill="#8a8420"/><path d="M811.8,279.6 l2.6,1.6 l-2.6,1.6 z" fill="#202020" stroke="#777" stroke-width="0.5"/><rect x="910.2" y="280.2" width="1.8" height="2" fill="#8a8420"/><path d="M912.3,279.6 l2.6,1.6 l-2.6,1.6 z" fill="#202020" stroke="#777" stroke-width="0.5"/><path d="M340.3,279.7 l2.4,1.5 l-2.4,1.5 z" fill="#202020" stroke="#777" stroke-width="0.5"/><path d="M438.3,279.7 l2.4,1.5 l-2.4,1.5 z" fill="#202020" stroke="#777" stroke-width="0.5"/><path d="M541.8,279.7 l2.4,1.5 l-2.4,1.5 z" fill="#202020" stroke="#777" stroke-width="0.5"/><path d="M642.3,253.1 l2.4,1.5 l-2.4,1.5 z" fill="#202020" stroke="#777" stroke-width="0.5"/><path d="M642.3,305.8 l2.4,1.5 l-2.4,1.5 z" fill="#202020" stroke="#777" stroke-width="0.5"/><path d="M740.8,279.7 l2.4,1.5 l-2.4,1.5 z" fill="#202020" stroke="#777" stroke-width="0.5"/><path d="M844.3,279.7 l2.4,1.5 l-2.4,1.5 z" fill="#202020" stroke="#777" stroke-width="0.5"/><path d="M945.8,279.7 l2.4,1.5 l-2.4,1.5 z" fill="#202020" stroke="#777" stroke-width="0.5"/></svg>
<svg style="left:618px;top:461px" width="20" height="4"><path d="M1,1h2v2h-2z M4,1h2v2h-2z M7,1h2v2h-2z M10,1h2v2h-2z M13,1h2v2h-2z M16,1h2v2h-2z" fill="#8a8a8a"/></svg>
<svg style="left:205px;top:499px" width="4" height="20"><path d="M1,1h2v2h-2z M1,4h2v2h-2z M1,7h2v2h-2z M1,10h2v2h-2z M1,13h2v2h-2z M1,16h2v2h-2z" fill="#8a8a8a"/></svg>

<!-- bottom -->

<div class="tab" style="left:209px;top:468px;width:106px;height:25px"><div class="t" style="left:9.30px;top:4.47px;font-size:12.5px;letter-spacing:0.530px;">Debug Output</div></div>
<div class="tab" style="left:316px;top:468px;width:73px;height:25px"><div class="t" style="left:10.10px;top:4.47px;font-size:12.5px;letter-spacing:0.008px;">Statistics</div></div>
<div class="tab" style="left:390px;top:468px;width:117px;height:25px"><div class="t" style="left:10.60px;top:4.47px;font-size:12.5px;letter-spacing:0.140px;">Analytics Report</div></div>
<div class="pane" style="left:209px;top:493px;width:833px;height:443px"></div><div class="abs" style="left:209px;top:492px;width:833px;height:1px;background:#282828"></div>
<div class="tab sel" style="left:508px;top:466px;width:150px;height:28px"><div class="t" style="left:9.20px;top:5.57px;font-size:12.5px;letter-spacing:0.131px;">Execution Trace Views</div></div>
<svg style="left:0;top:0" width="1352" height="941">
<path d="M223,504.5 L241,515 L223,525.5 Z" fill="#949497"/>
<rect x="256" y="506" width="7" height="17.5" fill="#949497"/><rect x="267" y="506" width="7" height="17.5" fill="#949497"/>
<rect x="282.5" y="500.5" width="31" height="30" rx="3" fill="#303030" stroke="#212121"/>
<rect x="289.5" y="506" width="17" height="17.5" fill="#949497"/>
<rect x="319" y="506" width="1" height="18.5" fill="#2a2a2a"/><rect x="358" y="506" width="1" height="18.5" fill="#2a2a2a"/><rect x="398" y="506" width="1" height="18.5" fill="#2a2a2a"/>
<g fill="none" stroke="#8a8a8a" stroke-width="1"><rect x="326.5" y="506.5" width="9" height="4" rx="0.5"/><rect x="340.5" y="506.5" width="8" height="4" rx="0.5"/><rect x="336.5" y="513.5" width="11" height="4" rx="0.5"/><rect x="336.5" y="519.5" width="11" height="4" rx="0.5"/></g>
<path d="M335.5,508.5 h5 M336.5,508.5 l1.5,7 M336.5,508.5 v13" fill="none" stroke="#c86a20" stroke-width="1"/>
<rect x="368" y="506.5" width="12" height="6" fill="#f5c000"/><rect x="381" y="506.5" width="4.5" height="6" fill="#6a6a6a"/><rect x="386" y="506.5" width="1.2" height="6" fill="#e07820"/>
<rect x="368" y="515" width="1.6" height="7" fill="#6a6a6a"/><rect x="371" y="515" width="3" height="7" fill="#a0d020"/><rect x="375" y="515" width="4.6" height="7" fill="#6a6a6a"/><rect x="381" y="515" width="7.6" height="7" fill="#6a6a6a"/>
<path d="M491,512 h9 l-4.5,5.4 z" fill="#9a9a9a"/>
</svg>
<div class="t" style="left:410.05px;top:508.47px;font-size:12.5px;letter-spacing:0.175px;">Thread View</div>
<div class="abs" style="left:211px;top:541px;width:813.5px;height:393.5px;background:#161616"></div><div class="abs" style="left:212px;top:542px;width:811px;height:391px;background:#1e1e1e;border:1px solid #3b3b3b"></div>
<div class="abs" style="left:213px;top:543px;width:33px;height:100px;background:#585858"></div>
<div class="abs" style="left:213px;top:645px;width:33px;height:32px;background:#585858"></div>
<div class="abs" style="left:213px;top:679px;width:33px;height:100px;background:#585858"></div>
<div class="abs" style="left:213px;top:781px;width:33px;height:151px;background:#585858"></div>
<div class="abs" style="left:213px;top:643px;width:809px;height:2px;background:#3b3b3b"></div>
<div class="abs" style="left:213px;top:677px;width:809px;height:2px;background:#3b3b3b"></div>
<div class="abs" style="left:213px;top:779px;width:809px;height:2px;background:#3b3b3b"></div>
<div class="rot" style="left:230.67px;top:629.92px;font-size:12.5px;line-height:16px;letter-spacing:0.145px;color:#a2a2a2;">Concurrency</div>
<div class="rot" style="left:230.97px;top:676.25px;font-size:12.5px;line-height:16px;letter-spacing:0.225px;color:#a2a2a2;">Time</div>
<div class="rot" style="left:230.97px;top:749.30px;font-size:12.5px;line-height:16px;letter-spacing:0.188px;color:#a2a2a2;">Details</div>
<div class="rot" style="left:230.97px;top:901.50px;font-size:12.5px;line-height:16px;letter-spacing:0.288px;color:#a2a2a2;">Over-time Data</div>
<div class="rot" style="left:293.47px;top:614.40px;font-size:12.5px;line-height:16px;letter-spacing:1.175px;">Node</div>
<div class="rot" style="left:310.97px;top:614.02px;font-size:12.5px;line-height:16px;letter-spacing:0.085px;">Concurrency</div>
<div class="rot" style="left:293.47px;top:775.20px;font-size:12.5px;line-height:16px;letter-spacing:1.275px;">Node</div>
<div class="rot" style="left:310.97px;top:774.83px;font-size:12.5px;line-height:16px;letter-spacing:0.085px;">Concurrency</div>
<div class="t" style="left:597.70px;top:544.67px;font-size:12.5px;letter-spacing:0.108px;font-weight:bold;color:#d8d8d8;">Concurrency Overview</div>
<div class="t" style="left:326.93px;top:623.67px;font-size:12.5px;">0</div>
<div class="t" style="left:653.75px;top:623.67px;font-size:12.5px;letter-spacing:-0.008px;">Time</div>
<div class="t" style="left:928.98px;top:623.67px;font-size:12.5px;letter-spacing:-0.023px;">2029.038327s</div>
<div class="t" style="left:320.38px;top:653.67px;font-size:12.5px;letter-spacing:0.800px;">0s</div><div class="t" style="left:380.58px;top:653.67px;font-size:12.5px;letter-spacing:0.058px;">200s</div><div class="t" style="left:447.92px;top:653.67px;font-size:12.5px;letter-spacing:-0.067px;">400s</div><div class="t" style="left:514.50px;top:653.67px;font-size:12.5px;letter-spacing:0.058px;">600s</div><div class="t" style="left:581.59px;top:653.67px;font-size:12.5px;letter-spacing:0.017px;">800s</div><div class="t" style="left:645.32px;top:653.67px;font-size:12.5px;letter-spacing:-0.188px;">1000s</div><div class="t" style="left:712.28px;top:653.67px;font-size:12.5px;letter-spacing:-0.188px;">1200s</div><div class="t" style="left:779.24px;top:653.67px;font-size:12.5px;letter-spacing:-0.188px;">1400s</div><div class="t" style="left:846.20px;top:653.67px;font-size:12.5px;letter-spacing:-0.188px;">1600s</div><div class="t" style="left:913.16px;top:653.67px;font-size:12.5px;letter-spacing:-0.188px;">1800s</div><div class="t" style="left:980.37px;top:653.67px;font-size:12.5px;letter-spacing:-0.250px;">2000s</div><div class="t" style="left:261.45px;top:783.67px;font-size:12.5px;letter-spacing:0.275px;color:#d4d4d4;">Thread 0</div><div class="t" style="left:261.45px;top:802.77px;font-size:12.5px;letter-spacing:0.293px;color:#d4d4d4;">Thread 1</div><div class="t" style="left:261.45px;top:821.87px;font-size:12.5px;letter-spacing:0.293px;color:#d4d4d4;">Thread 2</div><div class="t" style="left:261.45px;top:840.97px;font-size:12.5px;letter-spacing:0.275px;color:#d4d4d4;">Thread 3</div><div class="t" style="left:261.45px;top:860.07px;font-size:12.5px;letter-spacing:0.257px;color:#d4d4d4;">Thread 4</div><div class="t" style="left:261.45px;top:879.17px;font-size:12.5px;letter-spacing:0.275px;color:#d4d4d4;">Thread 5</div><div class="t" style="left:261.45px;top:898.27px;font-size:12.5px;letter-spacing:0.275px;color:#d4d4d4;">Thread 6</div><div class="t" style="left:261.45px;top:917.37px;font-size:12.5px;letter-spacing:0.293px;color:#d4d4d4;">Thread 7</div>
<svg style="left:0;top:0" width="1352" height="941"><path d="M337,614.5h1v-25.8h-1zM338,614.5h4v-34.4h-4zM342,614.5h2v-17.2h-2zM344,614.5h5v-25.8h-5zM349,614.5h1v-17.2h-1zM350,614.5h2v-34.4h-2zM352,614.5h4v-25.8h-4zM356,614.5h1v-17.2h-1zM357,614.5h1v-11.2h-1zM358,614.5h2v-25.8h-2zM360,614.5h2v-34.4h-2zM362,614.5h1v-25.8h-1zM363,614.5h2v-11.2h-2zM365,614.5h5v-25.8h-5zM370,614.5h2v-17.2h-2zM372,614.5h1v-25.8h-1zM373,614.5h1v-34.4h-1zM374,614.5h3v-25.8h-3zM377,614.5h1v-17.2h-1zM378,614.5h1v-11.2h-1zM379,614.5h2v-25.8h-2zM381,614.5h2v-34.4h-2zM383,614.5h1v-25.8h-1zM384,614.5h1v-34.4h-1zM385,614.5h1v-11.2h-1zM386,614.5h5v-25.8h-5zM391,614.5h2v-17.2h-2zM393,614.5h1v-25.8h-1zM394,614.5h1v-34.4h-1zM395,614.5h3v-25.8h-3zM398,614.5h2v-11.2h-2zM400,614.5h1v-25.8h-1zM401,614.5h1v-34.4h-1zM402,614.5h3v-25.8h-3zM405,614.5h1v-11.2h-1zM406,614.5h1v-17.2h-1zM407,614.5h5v-25.8h-5zM412,614.5h2v-17.2h-2zM414,614.5h1v-25.8h-1zM415,614.5h1v-34.4h-1zM416,614.5h3v-25.8h-3zM419,614.5h2v-17.2h-2zM421,614.5h5v-25.8h-5zM426,614.5h1v-17.2h-1zM427,614.5h1v-11.2h-1zM428,614.5h1v-34.4h-1zM429,614.5h4v-25.8h-4zM433,614.5h2v-17.2h-2zM435,614.5h5v-25.8h-5zM440,614.5h1v-34.4h-1zM441,614.5h1v-17.2h-1zM442,614.5h5v-25.8h-5zM447,614.5h2v-17.2h-2zM449,614.5h2v-25.8h-2zM451,614.5h1v-34.4h-1zM452,614.5h1v-25.8h-1zM453,614.5h3v-34.4h-3zM456,614.5h1v-43.0h-1zM457,614.5h1v-25.8h-1zM458,614.5h4v-34.4h-4zM462,614.5h1v-43.0h-1zM463,614.5h1v-34.4h-1zM464,614.5h1v-51.6h-1zM465,614.5h1v-43.0h-1zM466,614.5h1v-34.4h-1zM467,614.5h1v-25.8h-1zM468,614.5h7v-34.4h-7zM475,614.5h1v-25.8h-1zM476,614.5h2v-34.4h-2zM478,614.5h1v-25.8h-1zM479,614.5h2v-34.4h-2zM481,614.5h1v-25.8h-1zM482,614.5h1v-43.0h-1zM483,614.5h1v-25.8h-1zM484,614.5h2v-34.4h-2zM486,614.5h1v-25.8h-1zM487,614.5h1v-34.4h-1zM488,614.5h1v-43.0h-1zM489,614.5h5v-34.4h-5zM494,614.5h3v-25.8h-3zM497,614.5h1v-34.4h-1zM498,614.5h2v-25.8h-2zM500,614.5h1v-43.0h-1zM501,614.5h1v-25.8h-1zM502,614.5h1v-43.0h-1zM503,614.5h1v-17.2h-1zM504,614.5h1v-34.4h-1zM505,614.5h1v-17.2h-1zM506,614.5h1v-43.0h-1zM507,614.5h1v-25.8h-1zM508,614.5h1v-43.0h-1zM509,614.5h2v-34.4h-2zM511,614.5h1v-25.8h-1zM512,614.5h1v-43.0h-1zM513,614.5h1v-34.4h-1zM514,614.5h1v-43.0h-1zM515,614.5h1v-25.8h-1zM516,614.5h1v-43.0h-1zM517,614.5h1v-25.8h-1zM518,614.5h1v-34.4h-1zM519,614.5h1v-43.0h-1zM520,614.5h7v-34.4h-7zM527,614.5h1v-43.0h-1zM528,614.5h1v-25.8h-1zM529,614.5h1v-34.4h-1zM530,614.5h1v-25.8h-1zM531,614.5h3v-34.4h-3zM534,614.5h1v-43.0h-1zM535,614.5h1v-25.8h-1zM536,614.5h2v-34.4h-2zM538,614.5h1v-43.0h-1zM539,614.5h2v-34.4h-2zM541,614.5h1v-25.8h-1zM542,614.5h1v-43.0h-1zM543,614.5h3v-34.4h-3zM546,614.5h1v-25.8h-1zM547,614.5h1v-43.0h-1zM548,614.5h1v-34.4h-1zM549,614.5h1v-43.0h-1zM550,614.5h2v-25.8h-2zM552,614.5h2v-34.4h-2zM554,614.5h1v-43.0h-1zM555,614.5h1v-25.8h-1zM556,614.5h1v-43.0h-1zM557,614.5h1v-25.8h-1zM558,614.5h2v-34.4h-2zM560,614.5h1v-43.0h-1zM561,614.5h3v-34.4h-3zM564,614.5h1v-25.8h-1zM565,614.5h1v-34.4h-1zM566,614.5h1v-25.8h-1zM567,614.5h1v-34.4h-1zM568,614.5h1v-43.0h-1zM569,614.5h1v-34.4h-1zM570,614.5h1v-25.8h-1zM571,614.5h1v-34.4h-1zM572,614.5h1v-25.8h-1zM573,614.5h1v-43.0h-1zM574,614.5h2v-25.8h-2zM576,614.5h6v-34.4h-6zM582,614.5h1v-25.8h-1zM583,614.5h1v-43.0h-1zM584,614.5h1v-25.8h-1zM585,614.5h1v-34.4h-1zM586,614.5h1v-25.8h-1zM587,614.5h1v-43.0h-1zM588,614.5h7v-34.4h-7zM595,614.5h1v-17.2h-1zM596,614.5h1v-34.4h-1zM597,614.5h1v-25.8h-1zM598,614.5h2v-34.4h-2zM600,614.5h1v-43.0h-1zM601,614.5h2v-34.4h-2zM603,614.5h7v-25.8h-7zM610,614.5h1v-34.4h-1zM611,614.5h9v-25.8h-9zM620,614.5h1v-34.4h-1zM621,614.5h3v-25.8h-3zM624,614.5h15v-34.4h-15zM639,614.5h1v-25.8h-1zM640,614.5h1v-34.4h-1zM641,614.5h1v-25.8h-1zM642,614.5h3v-34.4h-3zM645,614.5h1v-43.0h-1zM646,614.5h1v-25.8h-1zM647,614.5h1v-43.0h-1zM648,614.5h2v-34.4h-2zM650,614.5h1v-25.8h-1zM651,614.5h1v-43.0h-1zM652,614.5h1v-34.4h-1zM653,614.5h1v-17.2h-1zM654,614.5h2v-34.4h-2zM656,614.5h1v-25.8h-1zM657,614.5h1v-43.0h-1zM658,614.5h3v-34.4h-3zM661,614.5h1v-51.6h-1zM662,614.5h1v-34.4h-1zM663,614.5h1v-25.8h-1zM664,614.5h1v-43.0h-1zM665,614.5h3v-34.4h-3zM668,614.5h1v-25.8h-1zM669,614.5h1v-17.2h-1zM670,614.5h2v-25.8h-2zM672,614.5h1v-43.0h-1zM673,614.5h2v-25.8h-2zM675,614.5h2v-43.0h-2zM677,614.5h1v-34.4h-1zM678,614.5h1v-25.8h-1zM679,614.5h7v-34.4h-7zM686,614.5h1v-25.8h-1zM687,614.5h4v-34.4h-4zM691,614.5h1v-51.6h-1zM692,614.5h1v-25.8h-1zM693,614.5h2v-34.4h-2zM695,614.5h3v-25.8h-3zM698,614.5h2v-43.0h-2zM700,614.5h1v-34.4h-1zM701,614.5h1v-17.2h-1zM702,614.5h1v-34.4h-1zM703,614.5h1v-25.8h-1zM704,614.5h1v-34.4h-1zM705,614.5h1v-25.8h-1zM706,614.5h3v-34.4h-3zM709,614.5h1v-25.8h-1zM710,614.5h1v-34.4h-1zM711,614.5h1v-25.8h-1zM712,614.5h3v-34.4h-3zM715,614.5h1v-25.8h-1zM716,614.5h3v-34.4h-3zM719,614.5h1v-25.8h-1zM720,614.5h1v-43.0h-1zM721,614.5h1v-25.8h-1zM722,614.5h2v-34.4h-2zM724,614.5h1v-25.8h-1zM725,614.5h1v-43.0h-1zM726,614.5h3v-34.4h-3zM729,614.5h1v-25.8h-1zM730,614.5h1v-43.0h-1zM731,614.5h2v-34.4h-2zM733,614.5h1v-43.0h-1zM734,614.5h4v-34.4h-4zM738,614.5h1v-25.8h-1zM739,614.5h1v-34.4h-1zM740,614.5h1v-25.8h-1zM741,614.5h2v-34.4h-2zM743,614.5h1v-25.8h-1zM744,614.5h1v-34.4h-1zM745,614.5h1v-17.2h-1zM746,614.5h9v-34.4h-9zM755,614.5h1v-17.2h-1zM756,614.5h11v-34.4h-11zM767,614.5h1v-25.8h-1zM768,614.5h1v-34.4h-1zM769,614.5h1v-25.8h-1zM770,614.5h2v-34.4h-2zM772,614.5h1v-17.2h-1zM773,614.5h1v-34.4h-1zM774,614.5h1v-43.0h-1zM775,614.5h3v-34.4h-3zM778,614.5h1v-43.0h-1zM779,614.5h5v-34.4h-5zM784,614.5h1v-25.8h-1zM785,614.5h1v-34.4h-1zM786,614.5h1v-25.8h-1zM787,614.5h1v-43.0h-1zM788,614.5h1v-25.8h-1zM789,614.5h1v-43.0h-1zM790,614.5h1v-17.2h-1zM791,614.5h3v-34.4h-3zM794,614.5h1v-25.8h-1zM795,614.5h1v-34.4h-1zM796,614.5h4v-25.8h-4zM800,614.5h1v-43.0h-1zM801,614.5h1v-34.4h-1zM802,614.5h1v-43.0h-1zM803,614.5h6v-34.4h-6zM809,614.5h1v-43.0h-1zM810,614.5h1v-34.4h-1zM811,614.5h1v-43.0h-1zM812,614.5h2v-34.4h-2zM814,614.5h1v-17.2h-1zM815,614.5h2v-34.4h-2zM817,614.5h1v-25.8h-1zM818,614.5h4v-34.4h-4zM822,614.5h2v-25.8h-2zM824,614.5h2v-34.4h-2zM826,614.5h1v-43.0h-1zM827,614.5h1v-34.4h-1zM828,614.5h1v-25.8h-1zM829,614.5h1v-43.0h-1zM830,614.5h1v-34.4h-1zM831,614.5h1v-25.8h-1zM832,614.5h2v-34.4h-2zM834,614.5h1v-17.2h-1zM835,614.5h1v-51.6h-1zM836,614.5h1v-34.4h-1zM837,614.5h1v-25.8h-1zM838,614.5h1v-43.0h-1zM839,614.5h1v-34.4h-1zM840,614.5h1v-43.0h-1zM841,614.5h1v-25.8h-1zM842,614.5h1v-43.0h-1zM843,614.5h4v-34.4h-4zM847,614.5h5v-25.8h-5zM852,614.5h1v-34.4h-1zM853,614.5h1v-43.0h-1zM854,614.5h2v-34.4h-2zM856,614.5h1v-43.0h-1zM857,614.5h3v-34.4h-3zM860,614.5h1v-25.8h-1zM861,614.5h1v-43.0h-1zM862,614.5h3v-34.4h-3zM865,614.5h1v-25.8h-1zM866,614.5h1v-34.4h-1zM867,614.5h1v-25.8h-1zM868,614.5h1v-43.0h-1zM869,614.5h1v-25.8h-1zM870,614.5h1v-43.0h-1zM871,614.5h2v-34.4h-2zM873,614.5h1v-25.8h-1zM874,614.5h2v-34.4h-2zM876,614.5h2v-43.0h-2zM878,614.5h1v-34.4h-1zM879,614.5h1v-17.2h-1zM880,614.5h6v-34.4h-6zM886,614.5h2v-25.8h-2zM888,614.5h2v-43.0h-2zM890,614.5h8v-25.8h-8zM898,614.5h1v-43.0h-1zM899,614.5h1v-25.8h-1zM900,614.5h1v-34.4h-1zM901,614.5h2v-25.8h-2zM903,614.5h1v-34.4h-1zM904,614.5h1v-25.8h-1zM905,614.5h5v-34.4h-5zM910,614.5h1v-43.0h-1zM911,614.5h1v-34.4h-1zM912,614.5h1v-25.8h-1zM913,614.5h1v-43.0h-1zM914,614.5h1v-34.4h-1zM915,614.5h1v-43.0h-1zM916,614.5h1v-34.4h-1zM917,614.5h6v-25.8h-6zM923,614.5h1v-17.2h-1zM924,614.5h2v-34.4h-2zM926,614.5h1v-25.8h-1zM927,614.5h1v-43.0h-1zM928,614.5h4v-34.4h-4zM932,614.5h1v-43.0h-1zM933,614.5h1v-34.4h-1zM934,614.5h1v-25.8h-1zM935,614.5h1v-43.0h-1zM936,614.5h1v-25.8h-1zM937,614.5h2v-34.4h-2zM939,614.5h2v-25.8h-2zM941,614.5h1v-34.4h-1zM942,614.5h2v-25.8h-2zM944,614.5h1v-34.4h-1zM945,614.5h8v-25.8h-8zM953,614.5h4v-34.4h-4zM957,614.5h1v-43.0h-1zM958,614.5h1v-34.4h-1zM959,614.5h1v-43.0h-1zM960,614.5h1v-34.4h-1zM961,614.5h1v-43.0h-1zM962,614.5h1v-25.8h-1zM963,614.5h1v-34.4h-1zM964,614.5h1v-25.8h-1zM965,614.5h1v-34.4h-1zM966,614.5h3v-25.8h-3zM969,614.5h1v-34.4h-1zM970,614.5h1v-51.6h-1zM971,614.5h8v-34.4h-8zM979,614.5h1v-25.8h-1zM980,614.5h1v-34.4h-1zM981,614.5h1v-43.0h-1zM982,614.5h1v-25.8h-1zM983,614.5h1v-34.4h-1zM984,614.5h1v-43.0h-1zM985,614.5h1v-34.4h-1zM986,614.5h1v-25.8h-1zM987,614.5h1v-43.0h-1zM988,614.5h2v-34.4h-2zM990,614.5h1v-25.8h-1zM991,614.5h3v-34.4h-3zM994,614.5h1v-25.8h-1zM995,614.5h1v-43.0h-1zM996,614.5h4v-25.8h-4zM1000,614.5h1v-24.9h-1zM1001,614.5h4v-25.8h-4zM1005,614.5h1v-24.9h-1zM1006,614.5h1v-16.3h-1z" fill="#b97b1a" shape-rendering="crispEdges"/><path d="M452,614.5h1v-10.4h-1zM455,614.5h1v-11.3h-1zM456,614.5h1v-3.8h-1zM459,614.5h1v-9.5h-1zM465,614.5h1v-6.6h-1zM466,614.5h1v-4.9h-1zM467,614.5h1v-22.7h-1zM468,614.5h1v-11.1h-1zM471,614.5h1v-4.4h-1zM473,614.5h1v-6.8h-1zM474,614.5h1v-21.1h-1zM476,614.5h1v-9.4h-1zM477,614.5h1v-6.4h-1zM479,614.5h1v-7.5h-1zM481,614.5h1v-2.8h-1zM482,614.5h1v-2.2h-1zM490,614.5h1v-1.8h-1zM497,614.5h1v-4.1h-1zM499,614.5h1v-5.2h-1zM503,614.5h1v-16.4h-1zM505,614.5h1v-2.7h-1zM511,614.5h1v-21.5h-1zM512,614.5h1v-3.4h-1zM515,614.5h1v-19.7h-1zM517,614.5h1v-18.1h-1zM522,614.5h1v-24.0h-1zM525,614.5h1v-11.1h-1zM527,614.5h1v-7.4h-1zM528,614.5h1v-2.2h-1zM529,614.5h1v-8.5h-1zM532,614.5h1v-14.9h-1zM536,614.5h1v-4.9h-1zM537,614.5h1v-5.6h-1zM538,614.5h1v-3.5h-1zM540,614.5h1v-8.9h-1zM542,614.5h1v-21.3h-1zM561,614.5h1v-6.7h-1zM566,614.5h1v-2.2h-1zM567,614.5h1v-5.2h-1zM569,614.5h1v-13.1h-1zM570,614.5h1v-4.4h-1zM571,614.5h1v-8.0h-1zM577,614.5h1v-13.5h-1zM579,614.5h1v-9.7h-1zM582,614.5h1v-3.8h-1zM583,614.5h1v-7.9h-1zM586,614.5h1v-2.0h-1zM587,614.5h1v-11.2h-1zM592,614.5h1v-8.1h-1zM594,614.5h1v-11.6h-1zM596,614.5h1v-17.2h-1zM597,614.5h1v-10.2h-1zM599,614.5h1v-6.7h-1zM600,614.5h1v-23.2h-1zM602,614.5h1v-16.7h-1zM604,614.5h1v-3.8h-1zM606,614.5h1v-3.3h-1zM613,614.5h1v-8.1h-1zM615,614.5h1v-9.4h-1zM620,614.5h1v-3.7h-1zM621,614.5h1v-9.3h-1zM622,614.5h1v-10.7h-1zM623,614.5h1v-3.0h-1zM626,614.5h1v-6.9h-1zM630,614.5h1v-6.2h-1zM631,614.5h1v-15.3h-1zM638,614.5h1v-10.0h-1zM640,614.5h1v-7.0h-1zM643,614.5h1v-3.2h-1zM646,614.5h1v-6.6h-1zM649,614.5h1v-1.8h-1zM653,614.5h1v-9.2h-1zM658,614.5h1v-3.9h-1zM659,614.5h1v-6.0h-1zM661,614.5h1v-2.3h-1zM663,614.5h1v-2.8h-1zM667,614.5h1v-4.2h-1zM668,614.5h1v-17.5h-1zM672,614.5h1v-6.8h-1zM673,614.5h1v-7.8h-1zM674,614.5h1v-3.8h-1zM676,614.5h1v-8.6h-1zM679,614.5h1v-5.5h-1zM680,614.5h1v-8.1h-1zM682,614.5h1v-21.4h-1zM683,614.5h1v-6.2h-1zM684,614.5h1v-6.5h-1zM693,614.5h1v-3.0h-1zM695,614.5h1v-3.2h-1zM697,614.5h1v-8.6h-1zM700,614.5h1v-2.2h-1zM703,614.5h1v-3.0h-1zM704,614.5h1v-8.1h-1zM706,614.5h1v-2.8h-1zM708,614.5h1v-14.8h-1zM710,614.5h1v-4.4h-1zM711,614.5h1v-11.4h-1zM714,614.5h1v-3.4h-1zM715,614.5h1v-5.8h-1zM716,614.5h1v-4.6h-1zM718,614.5h1v-10.8h-1zM721,614.5h1v-3.6h-1zM726,614.5h1v-4.1h-1zM727,614.5h1v-1.9h-1zM732,614.5h1v-16.5h-1zM733,614.5h1v-14.3h-1zM736,614.5h1v-9.4h-1zM739,614.5h1v-4.0h-1zM741,614.5h1v-4.5h-1zM743,614.5h1v-10.7h-1zM744,614.5h1v-4.6h-1zM745,614.5h1v-6.5h-1zM748,614.5h1v-4.2h-1zM749,614.5h1v-2.1h-1zM753,614.5h1v-1.9h-1zM754,614.5h1v-13.5h-1zM755,614.5h1v-10.2h-1zM767,614.5h1v-16.2h-1zM770,614.5h1v-5.2h-1zM771,614.5h1v-8.4h-1zM772,614.5h1v-3.3h-1zM774,614.5h1v-5.5h-1zM776,614.5h1v-6.2h-1zM782,614.5h1v-7.8h-1zM783,614.5h1v-14.6h-1zM787,614.5h1v-12.8h-1zM790,614.5h1v-13.2h-1zM791,614.5h1v-4.0h-1zM792,614.5h1v-2.6h-1zM793,614.5h1v-2.4h-1zM795,614.5h1v-7.0h-1zM797,614.5h1v-16.1h-1zM798,614.5h1v-5.2h-1zM802,614.5h1v-11.4h-1zM803,614.5h1v-15.8h-1zM811,614.5h1v-6.3h-1zM812,614.5h1v-1.8h-1zM816,614.5h1v-12.2h-1zM821,614.5h1v-9.6h-1zM822,614.5h1v-6.8h-1zM824,614.5h1v-1.9h-1zM828,614.5h1v-15.8h-1zM829,614.5h1v-6.0h-1zM836,614.5h1v-2.5h-1zM838,614.5h1v-2.5h-1zM839,614.5h1v-5.6h-1zM840,614.5h1v-11.0h-1zM841,614.5h1v-4.2h-1zM842,614.5h1v-2.2h-1zM844,614.5h1v-3.0h-1zM847,614.5h1v-12.8h-1zM851,614.5h1v-6.2h-1zM853,614.5h1v-23.1h-1zM858,614.5h1v-2.9h-1zM859,614.5h1v-4.2h-1zM861,614.5h1v-1.8h-1zM862,614.5h1v-17.3h-1zM872,614.5h1v-20.0h-1zM874,614.5h1v-17.4h-1zM876,614.5h1v-4.3h-1zM881,614.5h1v-7.9h-1zM882,614.5h1v-4.0h-1zM884,614.5h1v-13.3h-1zM886,614.5h1v-2.7h-1zM887,614.5h1v-1.8h-1zM890,614.5h1v-8.3h-1zM891,614.5h1v-11.4h-1zM893,614.5h1v-20.2h-1zM895,614.5h1v-6.6h-1zM896,614.5h1v-6.4h-1zM898,614.5h1v-4.2h-1zM900,614.5h1v-11.9h-1zM902,614.5h1v-16.2h-1zM907,614.5h1v-14.5h-1zM912,614.5h1v-13.5h-1zM914,614.5h1v-12.4h-1zM918,614.5h1v-8.6h-1zM920,614.5h1v-17.1h-1zM923,614.5h1v-20.6h-1zM924,614.5h1v-14.2h-1zM930,614.5h1v-14.7h-1zM931,614.5h1v-12.5h-1zM934,614.5h1v-6.1h-1zM935,614.5h1v-7.1h-1zM937,614.5h1v-16.0h-1zM942,614.5h1v-2.4h-1zM943,614.5h1v-7.7h-1zM945,614.5h1v-4.4h-1zM949,614.5h1v-18.6h-1zM953,614.5h1v-12.3h-1zM954,614.5h1v-3.9h-1zM956,614.5h1v-14.6h-1zM957,614.5h1v-6.5h-1zM959,614.5h1v-8.2h-1zM961,614.5h1v-8.6h-1zM965,614.5h1v-2.7h-1zM973,614.5h1v-10.6h-1zM975,614.5h1v-11.1h-1zM984,614.5h1v-3.7h-1zM987,614.5h1v-14.4h-1zM988,614.5h1v-2.6h-1zM990,614.5h1v-4.1h-1zM995,614.5h1v-9.4h-1zM997,614.5h1v-7.7h-1zM999,614.5h1v-3.4h-1zM1001,614.5h1v-5.2h-1zM1005,614.5h1v-22.4h-1zM1006,614.5h1v-16.3h-1z" fill="#aa3131" shape-rendering="crispEdges"/><path d="M328.0,614.5L328.0,597.3L337.5,597.3L337.5,614.5zM338.5,614.5L338.5,596.0L343.7,599.4L343.7,614.5zM345.3,614.5L345.3,597.8L351.0,600.9L351.0,614.5zM352.4,614.5L352.4,593.9L357.2,597.5L357.2,614.5zM358.9,614.5L358.9,595.9L364.2,602.2L364.2,614.5zM365.8,614.5L365.8,596.3L371.7,598.1L371.7,614.5zM373.2,614.5L373.2,596.7L378.2,609.1L378.2,614.5zM380.6,614.5L380.6,597.7L385.7,609.5L385.7,614.5zM387.5,614.5L387.5,594.1L392.2,608.4L392.2,614.5zM393.6,614.5L393.6,593.6L398.1,607.8L398.1,614.5zM400.7,614.5L400.7,594.5L405.6,609.2L405.6,614.5zM408.8,614.5L408.8,599.1L413.9,609.4L413.9,614.5zM415.6,614.5L415.6,596.0L420.0,608.0L420.0,614.5zM421.8,614.5L421.8,599.1L426.7,608.2L426.7,614.5zM429.8,614.5L429.8,597.8L434.9,605.0L434.9,614.5zM436.6,614.5L436.6,599.2L441.6,604.3L441.6,614.5zM443.5,614.5L443.5,597.8L448.1,610.6L448.1,614.5zM449.7,614.5L449.7,598.2L454.6,606.9L454.6,614.5z" fill="#aa3131"/><path d="M337,775.5h1v-45.9h-1zM338,775.5h4v-61.2h-4zM342,775.5h2v-30.6h-2zM344,775.5h5v-45.9h-5zM349,775.5h1v-30.6h-1zM350,775.5h2v-61.2h-2zM352,775.5h4v-45.9h-4zM356,775.5h1v-30.6h-1zM357,775.5h1v-19.9h-1zM358,775.5h2v-45.9h-2zM360,775.5h2v-61.2h-2zM362,775.5h1v-45.9h-1zM363,775.5h2v-19.9h-2zM365,775.5h5v-45.9h-5zM370,775.5h2v-30.6h-2zM372,775.5h1v-45.9h-1zM373,775.5h1v-61.2h-1zM374,775.5h3v-45.9h-3zM377,775.5h1v-30.6h-1zM378,775.5h1v-19.9h-1zM379,775.5h2v-45.9h-2zM381,775.5h2v-61.2h-2zM383,775.5h1v-45.9h-1zM384,775.5h1v-61.2h-1zM385,775.5h1v-19.9h-1zM386,775.5h5v-45.9h-5zM391,775.5h2v-30.6h-2zM393,775.5h1v-45.9h-1zM394,775.5h1v-61.2h-1zM395,775.5h3v-45.9h-3zM398,775.5h2v-19.9h-2zM400,775.5h1v-45.9h-1zM401,775.5h1v-61.2h-1zM402,775.5h3v-45.9h-3zM405,775.5h1v-19.9h-1zM406,775.5h1v-30.6h-1zM407,775.5h5v-45.9h-5zM412,775.5h2v-30.6h-2zM414,775.5h1v-45.9h-1zM415,775.5h1v-61.2h-1zM416,775.5h3v-45.9h-3zM419,775.5h2v-30.6h-2zM421,775.5h5v-45.9h-5zM426,775.5h1v-30.6h-1zM427,775.5h1v-19.9h-1zM428,775.5h1v-61.2h-1zM429,775.5h4v-45.9h-4zM433,775.5h2v-30.6h-2zM435,775.5h5v-45.9h-5zM440,775.5h1v-61.2h-1zM441,775.5h1v-30.6h-1zM442,775.5h5v-45.9h-5zM447,775.5h2v-30.6h-2zM449,775.5h2v-45.9h-2zM451,775.5h1v-61.2h-1zM452,775.5h1v-45.9h-1zM453,775.5h3v-61.2h-3zM456,775.5h1v-76.5h-1zM457,775.5h1v-45.9h-1zM458,775.5h4v-61.2h-4zM462,775.5h1v-76.5h-1zM463,775.5h1v-61.2h-1zM464,775.5h1v-91.8h-1zM465,775.5h1v-76.5h-1zM466,775.5h1v-61.2h-1zM467,775.5h1v-45.9h-1zM468,775.5h7v-61.2h-7zM475,775.5h1v-45.9h-1zM476,775.5h2v-61.2h-2zM478,775.5h1v-45.9h-1zM479,775.5h2v-61.2h-2zM481,775.5h1v-45.9h-1zM482,775.5h1v-76.5h-1zM483,775.5h1v-45.9h-1zM484,775.5h2v-61.2h-2zM486,775.5h1v-45.9h-1zM487,775.5h1v-61.2h-1zM488,775.5h1v-76.5h-1zM489,775.5h5v-61.2h-5zM494,775.5h3v-45.9h-3zM497,775.5h1v-61.2h-1zM498,775.5h2v-45.9h-2zM500,775.5h1v-76.5h-1zM501,775.5h1v-45.9h-1zM502,775.5h1v-76.5h-1zM503,775.5h1v-30.6h-1zM504,775.5h1v-61.2h-1zM505,775.5h1v-30.6h-1zM506,775.5h1v-76.5h-1zM507,775.5h1v-45.9h-1zM508,775.5h1v-76.5h-1zM509,775.5h2v-61.2h-2zM511,775.5h1v-45.9h-1zM512,775.5h1v-76.5h-1zM513,775.5h1v-61.2h-1zM514,775.5h1v-76.5h-1zM515,775.5h1v-45.9h-1zM516,775.5h1v-76.5h-1zM517,775.5h1v-45.9h-1zM518,775.5h1v-61.2h-1zM519,775.5h1v-76.5h-1zM520,775.5h7v-61.2h-7zM527,775.5h1v-76.5h-1zM528,775.5h1v-45.9h-1zM529,775.5h1v-61.2h-1zM530,775.5h1v-45.9h-1zM531,775.5h3v-61.2h-3zM534,775.5h1v-76.5h-1zM535,775.5h1v-45.9h-1zM536,775.5h2v-61.2h-2zM538,775.5h1v-76.5h-1zM539,775.5h2v-61.2h-2zM541,775.5h1v-45.9h-1zM542,775.5h1v-76.5h-1zM543,775.5h3v-61.2h-3zM546,775.5h1v-45.9h-1zM547,775.5h1v-76.5h-1zM548,775.5h1v-61.2h-1zM549,775.5h1v-76.5h-1zM550,775.5h2v-45.9h-2zM552,775.5h2v-61.2h-2zM554,775.5h1v-76.5h-1zM555,775.5h1v-45.9h-1zM556,775.5h1v-76.5h-1zM557,775.5h1v-45.9h-1zM558,775.5h2v-61.2h-2zM560,775.5h1v-76.5h-1zM561,775.5h3v-61.2h-3zM564,775.5h1v-45.9h-1zM565,775.5h1v-61.2h-1zM566,775.5h1v-45.9h-1zM567,775.5h1v-61.2h-1zM568,775.5h1v-76.5h-1zM569,775.5h1v-61.2h-1zM570,775.5h1v-45.9h-1zM571,775.5h1v-61.2h-1zM572,775.5h1v-45.9h-1zM573,775.5h1v-76.5h-1zM574,775.5h2v-45.9h-2zM576,775.5h6v-61.2h-6zM582,775.5h1v-45.9h-1zM583,775.5h1v-76.5h-1zM584,775.5h1v-45.9h-1zM585,775.5h1v-61.2h-1zM586,775.5h1v-45.9h-1zM587,775.5h1v-76.5h-1zM588,775.5h7v-61.2h-7zM595,775.5h1v-30.6h-1zM596,775.5h1v-61.2h-1zM597,775.5h1v-45.9h-1zM598,775.5h2v-61.2h-2zM600,775.5h1v-76.5h-1zM601,775.5h2v-61.2h-2zM603,775.5h7v-45.9h-7zM610,775.5h1v-61.2h-1zM611,775.5h9v-45.9h-9zM620,775.5h1v-61.2h-1zM621,775.5h3v-45.9h-3zM624,775.5h15v-61.2h-15zM639,775.5h1v-45.9h-1zM640,775.5h1v-61.2h-1zM641,775.5h1v-45.9h-1zM642,775.5h3v-61.2h-3zM645,775.5h1v-76.5h-1zM646,775.5h1v-45.9h-1zM647,775.5h1v-76.5h-1zM648,775.5h2v-61.2h-2zM650,775.5h1v-45.9h-1zM651,775.5h1v-76.5h-1zM652,775.5h1v-61.2h-1zM653,775.5h1v-30.6h-1zM654,775.5h2v-61.2h-2zM656,775.5h1v-45.9h-1zM657,775.5h1v-76.5h-1zM658,775.5h3v-61.2h-3zM661,775.5h1v-91.8h-1zM662,775.5h1v-61.2h-1zM663,775.5h1v-45.9h-1zM664,775.5h1v-76.5h-1zM665,775.5h3v-61.2h-3zM668,775.5h1v-45.9h-1zM669,775.5h1v-30.6h-1zM670,775.5h2v-45.9h-2zM672,775.5h1v-76.5h-1zM673,775.5h2v-45.9h-2zM675,775.5h2v-76.5h-2zM677,775.5h1v-61.2h-1zM678,775.5h1v-45.9h-1zM679,775.5h7v-61.2h-7zM686,775.5h1v-45.9h-1zM687,775.5h4v-61.2h-4zM691,775.5h1v-91.8h-1zM692,775.5h1v-45.9h-1zM693,775.5h2v-61.2h-2zM695,775.5h3v-45.9h-3zM698,775.5h2v-76.5h-2zM700,775.5h1v-61.2h-1zM701,775.5h1v-30.6h-1zM702,775.5h1v-61.2h-1zM703,775.5h1v-45.9h-1zM704,775.5h1v-61.2h-1zM705,775.5h1v-45.9h-1zM706,775.5h3v-61.2h-3zM709,775.5h1v-45.9h-1zM710,775.5h1v-61.2h-1zM711,775.5h1v-45.9h-1zM712,775.5h3v-61.2h-3zM715,775.5h1v-45.9h-1zM716,775.5h3v-61.2h-3zM719,775.5h1v-45.9h-1zM720,775.5h1v-76.5h-1zM721,775.5h1v-45.9h-1zM722,775.5h2v-61.2h-2zM724,775.5h1v-45.9h-1zM725,775.5h1v-76.5h-1zM726,775.5h3v-61.2h-3zM729,775.5h1v-45.9h-1zM730,775.5h1v-76.5h-1zM731,775.5h2v-61.2h-2zM733,775.5h1v-76.5h-1zM734,775.5h4v-61.2h-4zM738,775.5h1v-45.9h-1zM739,775.5h1v-61.2h-1zM740,775.5h1v-45.9h-1zM741,775.5h2v-61.2h-2zM743,775.5h1v-45.9h-1zM744,775.5h1v-61.2h-1zM745,775.5h1v-30.6h-1zM746,775.5h9v-61.2h-9zM755,775.5h1v-30.6h-1zM756,775.5h11v-61.2h-11zM767,775.5h1v-45.9h-1zM768,775.5h1v-61.2h-1zM769,775.5h1v-45.9h-1zM770,775.5h2v-61.2h-2zM772,775.5h1v-30.6h-1zM773,775.5h1v-61.2h-1zM774,775.5h1v-76.5h-1zM775,775.5h3v-61.2h-3zM778,775.5h1v-76.5h-1zM779,775.5h5v-61.2h-5zM784,775.5h1v-45.9h-1zM785,775.5h1v-61.2h-1zM786,775.5h1v-45.9h-1zM787,775.5h1v-76.5h-1zM788,775.5h1v-45.9h-1zM789,775.5h1v-76.5h-1zM790,775.5h1v-30.6h-1zM791,775.5h3v-61.2h-3zM794,775.5h1v-45.9h-1zM795,775.5h1v-61.2h-1zM796,775.5h4v-45.9h-4zM800,775.5h1v-76.5h-1zM801,775.5h1v-61.2h-1zM802,775.5h1v-76.5h-1zM803,775.5h6v-61.2h-6zM809,775.5h1v-76.5h-1zM810,775.5h1v-61.2h-1zM811,775.5h1v-76.5h-1zM812,775.5h2v-61.2h-2zM814,775.5h1v-30.6h-1zM815,775.5h2v-61.2h-2zM817,775.5h1v-45.9h-1zM818,775.5h4v-61.2h-4zM822,775.5h2v-45.9h-2zM824,775.5h2v-61.2h-2zM826,775.5h1v-76.5h-1zM827,775.5h1v-61.2h-1zM828,775.5h1v-45.9h-1zM829,775.5h1v-76.5h-1zM830,775.5h1v-61.2h-1zM831,775.5h1v-45.9h-1zM832,775.5h2v-61.2h-2zM834,775.5h1v-30.6h-1zM835,775.5h1v-91.8h-1zM836,775.5h1v-61.2h-1zM837,775.5h1v-45.9h-1zM838,775.5h1v-76.5h-1zM839,775.5h1v-61.2h-1zM840,775.5h1v-76.5h-1zM841,775.5h1v-45.9h-1zM842,775.5h1v-76.5h-1zM843,775.5h4v-61.2h-4zM847,775.5h5v-45.9h-5zM852,775.5h1v-61.2h-1zM853,775.5h1v-76.5h-1zM854,775.5h2v-61.2h-2zM856,775.5h1v-76.5h-1zM857,775.5h3v-61.2h-3zM860,775.5h1v-45.9h-1zM861,775.5h1v-76.5h-1zM862,775.5h3v-61.2h-3zM865,775.5h1v-45.9h-1zM866,775.5h1v-61.2h-1zM867,775.5h1v-45.9h-1zM868,775.5h1v-76.5h-1zM869,775.5h1v-45.9h-1zM870,775.5h1v-76.5h-1zM871,775.5h2v-61.2h-2zM873,775.5h1v-45.9h-1zM874,775.5h2v-61.2h-2zM876,775.5h2v-76.5h-2zM878,775.5h1v-61.2h-1zM879,775.5h1v-30.6h-1zM880,775.5h6v-61.2h-6zM886,775.5h2v-45.9h-2zM888,775.5h2v-76.5h-2zM890,775.5h8v-45.9h-8zM898,775.5h1v-76.5h-1zM899,775.5h1v-45.9h-1zM900,775.5h1v-61.2h-1zM901,775.5h2v-45.9h-2zM903,775.5h1v-61.2h-1zM904,775.5h1v-45.9h-1zM905,775.5h5v-61.2h-5zM910,775.5h1v-76.5h-1zM911,775.5h1v-61.2h-1zM912,775.5h1v-45.9h-1zM913,775.5h1v-76.5h-1zM914,775.5h1v-61.2h-1zM915,775.5h1v-76.5h-1zM916,775.5h1v-61.2h-1zM917,775.5h6v-45.9h-6zM923,775.5h1v-30.6h-1zM924,775.5h2v-61.2h-2zM926,775.5h1v-45.9h-1zM927,775.5h1v-76.5h-1zM928,775.5h4v-61.2h-4zM932,775.5h1v-76.5h-1zM933,775.5h1v-61.2h-1zM934,775.5h1v-45.9h-1zM935,775.5h1v-76.5h-1zM936,775.5h1v-45.9h-1zM937,775.5h2v-61.2h-2zM939,775.5h2v-45.9h-2zM941,775.5h1v-61.2h-1zM942,775.5h2v-45.9h-2zM944,775.5h1v-61.2h-1zM945,775.5h8v-45.9h-8zM953,775.5h4v-61.2h-4zM957,775.5h1v-76.5h-1zM958,775.5h1v-61.2h-1zM959,775.5h1v-76.5h-1zM960,775.5h1v-61.2h-1zM961,775.5h1v-76.5h-1zM962,775.5h1v-45.9h-1zM963,775.5h1v-61.2h-1zM964,775.5h1v-45.9h-1zM965,775.5h1v-61.2h-1zM966,775.5h3v-45.9h-3zM969,775.5h1v-61.2h-1zM970,775.5h1v-91.8h-1zM971,775.5h8v-61.2h-8zM979,775.5h1v-45.9h-1zM980,775.5h1v-61.2h-1zM981,775.5h1v-76.5h-1zM982,775.5h1v-45.9h-1zM983,775.5h1v-61.2h-1zM984,775.5h1v-76.5h-1zM985,775.5h1v-61.2h-1zM986,775.5h1v-45.9h-1zM987,775.5h1v-76.5h-1zM988,775.5h2v-61.2h-2zM990,775.5h1v-45.9h-1zM991,775.5h3v-61.2h-3zM994,775.5h1v-45.9h-1zM995,775.5h1v-76.5h-1zM996,775.5h4v-45.9h-4zM1000,775.5h1v-44.4h-1zM1001,775.5h4v-45.9h-4zM1005,775.5h1v-44.4h-1zM1006,775.5h1v-29.1h-1z" fill="#b97b1a" shape-rendering="crispEdges"/><path d="M452,775.5h1v-18.5h-1zM455,775.5h1v-20.1h-1zM456,775.5h1v-6.8h-1zM459,775.5h1v-16.9h-1zM465,775.5h1v-11.8h-1zM466,775.5h1v-8.7h-1zM467,775.5h1v-40.4h-1zM468,775.5h1v-19.7h-1zM471,775.5h1v-7.9h-1zM473,775.5h1v-12.0h-1zM474,775.5h1v-37.5h-1zM476,775.5h1v-16.7h-1zM477,775.5h1v-11.4h-1zM479,775.5h1v-13.3h-1zM481,775.5h1v-5.0h-1zM482,775.5h1v-3.9h-1zM490,775.5h1v-3.2h-1zM497,775.5h1v-7.2h-1zM499,775.5h1v-9.3h-1zM503,775.5h1v-29.1h-1zM505,775.5h1v-4.8h-1zM511,775.5h1v-38.3h-1zM512,775.5h1v-6.1h-1zM515,775.5h1v-35.0h-1zM517,775.5h1v-32.3h-1zM522,775.5h1v-42.7h-1zM525,775.5h1v-19.7h-1zM527,775.5h1v-13.2h-1zM528,775.5h1v-4.0h-1zM529,775.5h1v-15.1h-1zM532,775.5h1v-26.6h-1zM536,775.5h1v-8.8h-1zM537,775.5h1v-10.0h-1zM538,775.5h1v-6.3h-1zM540,775.5h1v-15.9h-1zM542,775.5h1v-37.9h-1zM561,775.5h1v-11.9h-1zM566,775.5h1v-3.9h-1zM567,775.5h1v-9.2h-1zM569,775.5h1v-23.4h-1zM570,775.5h1v-7.9h-1zM571,775.5h1v-14.2h-1zM577,775.5h1v-24.0h-1zM579,775.5h1v-17.2h-1zM582,775.5h1v-6.7h-1zM583,775.5h1v-14.0h-1zM586,775.5h1v-3.6h-1zM587,775.5h1v-20.0h-1zM592,775.5h1v-14.4h-1zM594,775.5h1v-20.7h-1zM596,775.5h1v-30.5h-1zM597,775.5h1v-18.2h-1zM599,775.5h1v-11.9h-1zM600,775.5h1v-41.2h-1zM602,775.5h1v-29.6h-1zM604,775.5h1v-6.8h-1zM606,775.5h1v-5.9h-1zM613,775.5h1v-14.4h-1zM615,775.5h1v-16.7h-1zM620,775.5h1v-6.5h-1zM621,775.5h1v-16.6h-1zM622,775.5h1v-19.1h-1zM623,775.5h1v-5.3h-1zM626,775.5h1v-12.2h-1zM630,775.5h1v-11.0h-1zM631,775.5h1v-27.3h-1zM638,775.5h1v-17.8h-1zM640,775.5h1v-12.5h-1zM643,775.5h1v-5.8h-1zM646,775.5h1v-11.8h-1zM649,775.5h1v-3.3h-1zM653,775.5h1v-16.4h-1zM658,775.5h1v-6.9h-1zM659,775.5h1v-10.7h-1zM661,775.5h1v-4.1h-1zM663,775.5h1v-5.0h-1zM667,775.5h1v-7.5h-1zM668,775.5h1v-31.1h-1zM672,775.5h1v-12.2h-1zM673,775.5h1v-14.0h-1zM674,775.5h1v-6.7h-1zM676,775.5h1v-15.3h-1zM679,775.5h1v-9.8h-1zM680,775.5h1v-14.5h-1zM682,775.5h1v-38.1h-1zM683,775.5h1v-11.0h-1zM684,775.5h1v-11.6h-1zM693,775.5h1v-5.3h-1zM695,775.5h1v-5.7h-1zM697,775.5h1v-15.2h-1zM700,775.5h1v-4.0h-1zM703,775.5h1v-5.3h-1zM704,775.5h1v-14.4h-1zM706,775.5h1v-4.9h-1zM708,775.5h1v-26.4h-1zM710,775.5h1v-7.8h-1zM711,775.5h1v-20.3h-1zM714,775.5h1v-6.0h-1zM715,775.5h1v-10.3h-1zM716,775.5h1v-8.3h-1zM718,775.5h1v-19.3h-1zM721,775.5h1v-6.5h-1zM726,775.5h1v-7.3h-1zM727,775.5h1v-3.4h-1zM732,775.5h1v-29.4h-1zM733,775.5h1v-25.5h-1zM736,775.5h1v-16.7h-1zM739,775.5h1v-7.1h-1zM741,775.5h1v-8.0h-1zM743,775.5h1v-19.0h-1zM744,775.5h1v-8.2h-1zM745,775.5h1v-11.6h-1zM748,775.5h1v-7.5h-1zM749,775.5h1v-3.7h-1zM753,775.5h1v-3.3h-1zM754,775.5h1v-24.0h-1zM755,775.5h1v-18.1h-1zM767,775.5h1v-28.8h-1zM770,775.5h1v-9.3h-1zM771,775.5h1v-15.0h-1zM772,775.5h1v-5.9h-1zM774,775.5h1v-9.7h-1zM776,775.5h1v-11.0h-1zM782,775.5h1v-13.9h-1zM783,775.5h1v-25.9h-1zM787,775.5h1v-22.8h-1zM790,775.5h1v-23.5h-1zM791,775.5h1v-7.0h-1zM792,775.5h1v-4.6h-1zM793,775.5h1v-4.3h-1zM795,775.5h1v-12.5h-1zM797,775.5h1v-28.6h-1zM798,775.5h1v-9.3h-1zM802,775.5h1v-20.3h-1zM803,775.5h1v-28.2h-1zM811,775.5h1v-11.3h-1zM812,775.5h1v-3.2h-1zM816,775.5h1v-21.7h-1zM821,775.5h1v-17.1h-1zM822,775.5h1v-12.0h-1zM824,775.5h1v-3.4h-1zM828,775.5h1v-28.1h-1zM829,775.5h1v-10.6h-1zM836,775.5h1v-4.4h-1zM838,775.5h1v-4.5h-1zM839,775.5h1v-10.0h-1zM840,775.5h1v-19.5h-1zM841,775.5h1v-7.5h-1zM842,775.5h1v-3.8h-1zM844,775.5h1v-5.3h-1zM847,775.5h1v-22.7h-1zM851,775.5h1v-11.1h-1zM853,775.5h1v-41.2h-1zM858,775.5h1v-5.1h-1zM859,775.5h1v-7.5h-1zM861,775.5h1v-3.2h-1zM862,775.5h1v-30.7h-1zM872,775.5h1v-35.5h-1zM874,775.5h1v-30.9h-1zM876,775.5h1v-7.6h-1zM881,775.5h1v-14.1h-1zM882,775.5h1v-7.2h-1zM884,775.5h1v-23.7h-1zM886,775.5h1v-4.8h-1zM887,775.5h1v-3.2h-1zM890,775.5h1v-14.7h-1zM891,775.5h1v-20.2h-1zM893,775.5h1v-35.9h-1zM895,775.5h1v-11.7h-1zM896,775.5h1v-11.3h-1zM898,775.5h1v-7.4h-1zM900,775.5h1v-21.1h-1zM902,775.5h1v-28.9h-1zM907,775.5h1v-25.9h-1zM912,775.5h1v-24.1h-1zM914,775.5h1v-22.1h-1zM918,775.5h1v-15.2h-1zM920,775.5h1v-30.4h-1zM923,775.5h1v-36.6h-1zM924,775.5h1v-25.2h-1zM930,775.5h1v-26.2h-1zM931,775.5h1v-22.2h-1zM934,775.5h1v-10.9h-1zM935,775.5h1v-12.7h-1zM937,775.5h1v-28.4h-1zM942,775.5h1v-4.3h-1zM943,775.5h1v-13.6h-1zM945,775.5h1v-7.8h-1zM949,775.5h1v-33.1h-1zM953,775.5h1v-21.9h-1zM954,775.5h1v-6.9h-1zM956,775.5h1v-25.9h-1zM957,775.5h1v-11.6h-1zM959,775.5h1v-14.6h-1zM961,775.5h1v-15.2h-1zM965,775.5h1v-4.9h-1zM973,775.5h1v-18.9h-1zM975,775.5h1v-19.7h-1zM984,775.5h1v-6.5h-1zM987,775.5h1v-25.6h-1zM988,775.5h1v-4.7h-1zM990,775.5h1v-7.2h-1zM995,775.5h1v-16.7h-1zM997,775.5h1v-13.8h-1zM999,775.5h1v-6.1h-1zM1001,775.5h1v-9.2h-1zM1005,775.5h1v-39.8h-1zM1006,775.5h1v-29.1h-1z" fill="#aa3131" shape-rendering="crispEdges"/><path d="M328.0,775.5L328.0,744.9L337.5,744.9L337.5,775.5zM338.5,775.5L338.5,742.5L343.7,748.7L343.7,775.5zM345.3,775.5L345.3,745.7L351.0,751.3L351.0,775.5zM352.4,775.5L352.4,738.9L357.2,745.2L357.2,775.5zM358.9,775.5L358.9,742.4L364.2,753.5L364.2,775.5zM365.8,775.5L365.8,743.1L371.7,746.3L371.7,775.5zM373.2,775.5L373.2,743.9L378.2,766.0L378.2,775.5zM380.6,775.5L380.6,745.6L385.7,766.6L385.7,775.5zM387.5,775.5L387.5,739.1L392.2,764.6L392.2,775.5zM393.6,775.5L393.6,738.3L398.1,763.6L398.1,775.5zM400.7,775.5L400.7,740.0L405.6,766.1L405.6,775.5zM408.8,775.5L408.8,748.0L413.9,766.4L413.9,775.5zM415.6,775.5L415.6,742.6L420.0,763.9L420.0,775.5zM421.8,775.5L421.8,748.1L426.7,764.2L426.7,775.5zM429.8,775.5L429.8,745.8L434.9,758.5L434.9,775.5zM436.6,775.5L436.6,748.3L441.6,757.3L441.6,775.5zM443.5,775.5L443.5,745.9L448.1,768.5L448.1,775.5zM449.7,775.5L449.7,746.5L454.6,762.0L454.6,775.5z" fill="#aa3131"/><rect x="328" y="614" width="679" height="1.3" fill="#b4b4b4"/><rect x="328" y="775" width="679" height="1.3" fill="#b4b4b4"/><rect x="328" y="616" width="2" height="5" fill="#c8c8c8"/><rect x="1006" y="614" width="2" height="7" fill="#c8c8c8"/><rect x="328" y="645" width="1.6" height="6" fill="#c8c8c8"/><rect x="328" y="671" width="1.6" height="6" fill="#c8c8c8"/><rect x="361" y="645" width="1" height="3" fill="#c8c8c8"/><rect x="361" y="674" width="1" height="3" fill="#c8c8c8"/><rect x="394" y="645" width="1.6" height="6" fill="#c8c8c8"/><rect x="394" y="671" width="1.6" height="6" fill="#c8c8c8"/><rect x="428" y="645" width="1" height="3" fill="#c8c8c8"/><rect x="428" y="674" width="1" height="3" fill="#c8c8c8"/><rect x="461" y="645" width="1.6" height="6" fill="#c8c8c8"/><rect x="461" y="671" width="1.6" height="6" fill="#c8c8c8"/><rect x="495" y="645" width="1" height="3" fill="#c8c8c8"/><rect x="495" y="674" width="1" height="3" fill="#c8c8c8"/><rect x="528" y="645" width="1.6" height="6" fill="#c8c8c8"/><rect x="528" y="671" width="1.6" height="6" fill="#c8c8c8"/><rect x="562" y="645" width="1" height="3" fill="#c8c8c8"/><rect x="562" y="674" width="1" height="3" fill="#c8c8c8"/><rect x="595" y="645" width="1.6" height="6" fill="#c8c8c8"/><rect x="595" y="671" width="1.6" height="6" fill="#c8c8c8"/><rect x="629" y="645" width="1" height="3" fill="#c8c8c8"/><rect x="629" y="674" width="1" height="3" fill="#c8c8c8"/><rect x="662" y="645" width="1.6" height="6" fill="#c8c8c8"/><rect x="662" y="671" width="1.6" height="6" fill="#c8c8c8"/><rect x="696" y="645" width="1" height="3" fill="#c8c8c8"/><rect x="696" y="674" width="1" height="3" fill="#c8c8c8"/><rect x="729" y="645" width="1.6" height="6" fill="#c8c8c8"/><rect x="729" y="671" width="1.6" height="6" fill="#c8c8c8"/><rect x="763" y="645" width="1" height="3" fill="#c8c8c8"/><rect x="763" y="674" width="1" height="3" fill="#c8c8c8"/><rect x="796" y="645" width="1.6" height="6" fill="#c8c8c8"/><rect x="796" y="671" width="1.6" height="6" fill="#c8c8c8"/><rect x="830" y="645" width="1" height="3" fill="#c8c8c8"/><rect x="830" y="674" width="1" height="3" fill="#c8c8c8"/><rect x="863" y="645" width="1.6" height="6" fill="#c8c8c8"/><rect x="863" y="671" width="1.6" height="6" fill="#c8c8c8"/><rect x="897" y="645" width="1" height="3" fill="#c8c8c8"/><rect x="897" y="674" width="1" height="3" fill="#c8c8c8"/><rect x="930" y="645" width="1.6" height="6" fill="#c8c8c8"/><rect x="930" y="671" width="1.6" height="6" fill="#c8c8c8"/><rect x="964" y="645" width="1" height="3" fill="#c8c8c8"/><rect x="964" y="674" width="1" height="3" fill="#c8c8c8"/><rect x="996" y="645" width="1.6" height="6" fill="#c8c8c8"/><rect x="996" y="671" width="1.6" height="6" fill="#c8c8c8"/><rect x="1006" y="645" width="2" height="6" fill="#c8c8c8"/><rect x="1006" y="671" width="2" height="6" fill="#c8c8c8"/><rect x="328" y="782.5" width="679" height="17.6" fill="#6e2b31"/><rect x="461" y="782.5" width="1" height="17.6" fill="#3c1a1e"/><rect x="473" y="782.5" width="1" height="17.6" fill="#3c1a1e"/><rect x="767" y="782.5" width="1" height="17.6" fill="#3c1a1e"/><rect x="882" y="782.5" width="1" height="17.6" fill="#3c1a1e"/><path d="M328,801.7h13v17.7h-13zM342,801.7h9v17.7h-9zM366,801.7h1v17.7h-1zM373,801.7h7v17.7h-7zM385,801.7h1v17.7h-1zM392,801.7h4v17.7h-4zM411,801.7h1v17.7h-1zM421,801.7h4v17.7h-4zM437,801.7h3v17.7h-3zM455,801.7h9v17.7h-9zM479,801.7h2v17.7h-2zM486,801.7h2v17.7h-2zM507,801.7h5v17.7h-5zM513,801.7h2v17.7h-2zM521,801.7h1v17.7h-1zM537,801.7h2v17.7h-2zM545,801.7h1v17.7h-1zM553,801.7h3v17.7h-3zM557,801.7h2v17.7h-2zM562,801.7h1v17.7h-1zM565,801.7h2v17.7h-2zM568,801.7h10v17.7h-10zM583,801.7h1v17.7h-1zM589,801.7h1v17.7h-1zM605,801.7h1v17.7h-1zM608,801.7h10v17.7h-10zM620,801.7h3v17.7h-3zM642,801.7h1v17.7h-1zM647,801.7h1v17.7h-1zM650,801.7h1v17.7h-1zM663,801.7h2v17.7h-2zM667,801.7h3v17.7h-3zM671,801.7h2v17.7h-2zM676,801.7h3v17.7h-3zM688,801.7h4v17.7h-4zM693,801.7h2v17.7h-2zM696,801.7h3v17.7h-3zM700,801.7h2v17.7h-2zM705,801.7h1v17.7h-1zM715,801.7h10v17.7h-10zM727,801.7h3v17.7h-3zM731,801.7h2v17.7h-2zM736,801.7h2v17.7h-2zM740,801.7h2v17.7h-2zM757,801.7h2v17.7h-2zM768,801.7h2v17.7h-2zM771,801.7h5v17.7h-5zM782,801.7h3v17.7h-3zM789,801.7h2v17.7h-2zM810,801.7h1v17.7h-1zM823,801.7h2v17.7h-2zM828,801.7h1v17.7h-1zM835,801.7h2v17.7h-2zM849,801.7h2v17.7h-2zM858,801.7h6v17.7h-6zM876,801.7h1v17.7h-1zM880,801.7h8v17.7h-8zM907,801.7h3v17.7h-3zM925,801.7h2v17.7h-2zM929,801.7h3v17.7h-3zM947,801.7h1v17.7h-1zM967,801.7h2v17.7h-2zM976,801.7h4v17.7h-4zM984,801.7h2v17.7h-2zM990,801.7h3v17.7h-3zM1002,801.7h2v17.7h-2zM1006,801.7h1v17.7h-1zM336,820.8h5v17.7h-5zM343,820.8h3v17.7h-3zM350,820.8h4v17.7h-4zM360,820.8h3v17.7h-3zM364,820.8h2v17.7h-2zM377,820.8h3v17.7h-3zM391,820.8h3v17.7h-3zM401,820.8h4v17.7h-4zM411,820.8h3v17.7h-3zM425,820.8h6v17.7h-6zM433,820.8h2v17.7h-2zM446,820.8h2v17.7h-2zM465,820.8h2v17.7h-2zM484,820.8h2v17.7h-2zM499,820.8h5v17.7h-5zM505,820.8h8v17.7h-8zM524,820.8h4v17.7h-4zM529,820.8h2v17.7h-2zM535,820.8h3v17.7h-3zM545,820.8h5v17.7h-5zM552,820.8h2v17.7h-2zM561,820.8h1v17.7h-1zM564,820.8h2v17.7h-2zM571,820.8h2v17.7h-2zM578,820.8h4v17.7h-4zM588,820.8h4v17.7h-4zM609,820.8h4v17.7h-4zM619,820.8h4v17.7h-4zM645,820.8h3v17.7h-3zM652,820.8h2v17.7h-2zM676,820.8h2v17.7h-2zM683,820.8h3v17.7h-3zM697,820.8h3v17.7h-3zM709,820.8h2v17.7h-2zM728,820.8h2v17.7h-2zM743,820.8h8v17.7h-8zM752,820.8h1v17.7h-1zM764,820.8h4v17.7h-4zM773,820.8h2v17.7h-2zM776,820.8h2v17.7h-2zM783,820.8h1v17.7h-1zM789,820.8h1v17.7h-1zM797,820.8h2v17.7h-2zM806,820.8h2v17.7h-2zM809,820.8h4v17.7h-4zM822,820.8h2v17.7h-2zM831,820.8h1v17.7h-1zM845,820.8h1v17.7h-1zM853,820.8h2v17.7h-2zM857,820.8h4v17.7h-4zM865,820.8h1v17.7h-1zM868,820.8h1v17.7h-1zM871,820.8h4v17.7h-4zM884,820.8h1v17.7h-1zM902,820.8h1v17.7h-1zM907,820.8h2v17.7h-2zM910,820.8h8v17.7h-8zM927,820.8h4v17.7h-4zM935,820.8h2v17.7h-2zM938,820.8h2v17.7h-2zM951,820.8h2v17.7h-2zM960,820.8h2v17.7h-2zM963,820.8h2v17.7h-2zM982,820.8h3v17.7h-3zM987,820.8h1v17.7h-1zM338,839.9h5v17.7h-5zM346,839.9h3v17.7h-3zM370,839.9h3v17.7h-3zM394,839.9h3v17.7h-3zM418,839.9h2v17.7h-2zM421,839.9h4v17.7h-4zM429,839.9h3v17.7h-3zM435,839.9h3v17.7h-3zM442,839.9h1v17.7h-1zM456,839.9h3v17.7h-3zM475,839.9h1v17.7h-1zM477,839.9h1v17.7h-1zM488,839.9h3v17.7h-3zM507,839.9h1v17.7h-1zM509,839.9h1v17.7h-1zM513,839.9h8v17.7h-8zM525,839.9h1v17.7h-1zM539,839.9h1v17.7h-1zM541,839.9h1v17.7h-1zM555,839.9h10v17.7h-10zM574,839.9h3v17.7h-3zM590,839.9h3v17.7h-3zM609,839.9h2v17.7h-2zM614,839.9h1v17.7h-1zM621,839.9h1v17.7h-1zM623,839.9h1v17.7h-1zM633,839.9h3v17.7h-3zM637,839.9h2v17.7h-2zM643,839.9h4v17.7h-4zM651,839.9h3v17.7h-3zM680,839.9h5v17.7h-5zM691,839.9h1v17.7h-1zM702,839.9h3v17.7h-3zM718,839.9h3v17.7h-3zM725,839.9h1v17.7h-1zM747,839.9h1v17.7h-1zM749,839.9h5v17.7h-5zM758,839.9h6v17.7h-6zM770,839.9h5v17.7h-5zM778,839.9h3v17.7h-3zM807,839.9h4v17.7h-4zM824,839.9h1v17.7h-1zM829,839.9h4v17.7h-4zM836,839.9h7v17.7h-7zM849,839.9h1v17.7h-1zM854,839.9h4v17.7h-4zM861,839.9h3v17.7h-3zM868,839.9h2v17.7h-2zM879,839.9h2v17.7h-2zM894,839.9h2v17.7h-2zM899,839.9h1v17.7h-1zM904,839.9h1v17.7h-1zM926,839.9h1v17.7h-1zM930,839.9h3v17.7h-3zM937,839.9h3v17.7h-3zM944,839.9h1v17.7h-1zM948,839.9h1v17.7h-1zM953,839.9h4v17.7h-4zM973,839.9h1v17.7h-1zM995,839.9h1v17.7h-1zM997,839.9h3v17.7h-3zM1003,839.9h1v17.7h-1zM342,859.0h1v17.7h-1zM346,859.0h1v17.7h-1zM348,859.0h9v17.7h-9zM359,859.0h3v17.7h-3zM377,859.0h4v17.7h-4zM383,859.0h2v17.7h-2zM392,859.0h4v17.7h-4zM397,859.0h5v17.7h-5zM403,859.0h1v17.7h-1zM408,859.0h9v17.7h-9zM419,859.0h1v17.7h-1zM422,859.0h1v17.7h-1zM426,859.0h1v17.7h-1zM429,859.0h2v17.7h-2zM432,859.0h1v17.7h-1zM445,859.0h5v17.7h-5zM462,859.0h3v17.7h-3zM470,859.0h4v17.7h-4zM475,859.0h1v17.7h-1zM496,859.0h1v17.7h-1zM509,859.0h1v17.7h-1zM511,859.0h1v17.7h-1zM520,859.0h3v17.7h-3zM530,859.0h3v17.7h-3zM538,859.0h3v17.7h-3zM544,859.0h1v17.7h-1zM555,859.0h1v17.7h-1zM559,859.0h10v17.7h-10zM571,859.0h2v17.7h-2zM583,859.0h2v17.7h-2zM590,859.0h3v17.7h-3zM598,859.0h5v17.7h-5zM608,859.0h1v17.7h-1zM611,859.0h3v17.7h-3zM615,859.0h3v17.7h-3zM622,859.0h2v17.7h-2zM626,859.0h2v17.7h-2zM640,859.0h1v17.7h-1zM642,859.0h4v17.7h-4zM651,859.0h1v17.7h-1zM657,859.0h2v17.7h-2zM660,859.0h1v17.7h-1zM664,859.0h3v17.7h-3zM674,859.0h2v17.7h-2zM679,859.0h2v17.7h-2zM683,859.0h3v17.7h-3zM694,859.0h2v17.7h-2zM703,859.0h2v17.7h-2zM708,859.0h2v17.7h-2zM712,859.0h3v17.7h-3zM735,859.0h3v17.7h-3zM740,859.0h3v17.7h-3zM746,859.0h4v17.7h-4zM753,859.0h3v17.7h-3zM760,859.0h2v17.7h-2zM765,859.0h3v17.7h-3zM778,859.0h2v17.7h-2zM787,859.0h4v17.7h-4zM806,859.0h2v17.7h-2zM818,859.0h2v17.7h-2zM824,859.0h3v17.7h-3zM847,859.0h2v17.7h-2zM850,859.0h2v17.7h-2zM862,859.0h3v17.7h-3zM867,859.0h8v17.7h-8zM882,859.0h1v17.7h-1zM886,859.0h1v17.7h-1zM895,859.0h4v17.7h-4zM900,859.0h3v17.7h-3zM910,859.0h2v17.7h-2zM919,859.0h1v17.7h-1zM925,859.0h1v17.7h-1zM929,859.0h3v17.7h-3zM939,859.0h1v17.7h-1zM950,859.0h5v17.7h-5zM960,859.0h3v17.7h-3zM965,859.0h4v17.7h-4zM981,859.0h4v17.7h-4zM988,859.0h1v17.7h-1zM990,859.0h2v17.7h-2zM1004,859.0h3v17.7h-3zM347,878.1h8v17.7h-8zM360,878.1h3v17.7h-3zM372,878.1h3v17.7h-3zM392,878.1h3v17.7h-3zM397,878.1h2v17.7h-2zM416,878.1h2v17.7h-2zM420,878.1h4v17.7h-4zM437,878.1h4v17.7h-4zM448,878.1h4v17.7h-4zM463,878.1h2v17.7h-2zM482,878.1h2v17.7h-2zM497,878.1h1v17.7h-1zM505,878.1h2v17.7h-2zM516,878.1h1v17.7h-1zM521,878.1h1v17.7h-1zM523,878.1h2v17.7h-2zM538,878.1h7v17.7h-7zM554,878.1h1v17.7h-1zM566,878.1h2v17.7h-2zM571,878.1h4v17.7h-4zM577,878.1h2v17.7h-2zM588,878.1h1v17.7h-1zM592,878.1h1v17.7h-1zM594,878.1h3v17.7h-3zM604,878.1h2v17.7h-2zM619,878.1h1v17.7h-1zM623,878.1h2v17.7h-2zM626,878.1h5v17.7h-5zM642,878.1h2v17.7h-2zM657,878.1h1v17.7h-1zM661,878.1h3v17.7h-3zM667,878.1h2v17.7h-2zM673,878.1h1v17.7h-1zM677,878.1h5v17.7h-5zM699,878.1h2v17.7h-2zM703,878.1h1v17.7h-1zM717,878.1h1v17.7h-1zM719,878.1h2v17.7h-2zM730,878.1h3v17.7h-3zM739,878.1h3v17.7h-3zM745,878.1h2v17.7h-2zM748,878.1h1v17.7h-1zM751,878.1h1v17.7h-1zM759,878.1h3v17.7h-3zM765,878.1h3v17.7h-3zM779,878.1h2v17.7h-2zM794,878.1h1v17.7h-1zM806,878.1h1v17.7h-1zM811,878.1h9v17.7h-9zM822,878.1h6v17.7h-6zM834,878.1h2v17.7h-2zM841,878.1h2v17.7h-2zM860,878.1h2v17.7h-2zM867,878.1h4v17.7h-4zM873,878.1h3v17.7h-3zM878,878.1h3v17.7h-3zM885,878.1h4v17.7h-4zM896,878.1h1v17.7h-1zM904,878.1h1v17.7h-1zM909,878.1h2v17.7h-2zM922,878.1h1v17.7h-1zM925,878.1h9v17.7h-9zM941,878.1h3v17.7h-3zM945,878.1h1v17.7h-1zM948,878.1h4v17.7h-4zM958,878.1h4v17.7h-4zM966,878.1h1v17.7h-1zM970,878.1h1v17.7h-1zM982,878.1h1v17.7h-1zM986,878.1h1v17.7h-1zM992,878.1h1v17.7h-1zM1000,878.1h5v17.7h-5zM357,897.2h1v17.7h-1zM364,897.2h3v17.7h-3zM374,897.2h2v17.7h-2zM386,897.2h4v17.7h-4zM406,897.2h3v17.7h-3zM410,897.2h2v17.7h-2zM414,897.2h3v17.7h-3zM427,897.2h9v17.7h-9zM441,897.2h2v17.7h-2zM445,897.2h1v17.7h-1zM453,897.2h4v17.7h-4zM460,897.2h2v17.7h-2zM463,897.2h2v17.7h-2zM481,897.2h1v17.7h-1zM490,897.2h5v17.7h-5zM500,897.2h1v17.7h-1zM514,897.2h1v17.7h-1zM521,897.2h5v17.7h-5zM528,897.2h2v17.7h-2zM531,897.2h4v17.7h-4zM548,897.2h4v17.7h-4zM555,897.2h2v17.7h-2zM560,897.2h3v17.7h-3zM568,897.2h1v17.7h-1zM571,897.2h3v17.7h-3zM577,897.2h3v17.7h-3zM581,897.2h3v17.7h-3zM587,897.2h2v17.7h-2zM592,897.2h3v17.7h-3zM611,897.2h3v17.7h-3zM620,897.2h4v17.7h-4zM629,897.2h1v17.7h-1zM638,897.2h2v17.7h-2zM647,897.2h2v17.7h-2zM657,897.2h2v17.7h-2zM662,897.2h1v17.7h-1zM664,897.2h3v17.7h-3zM680,897.2h2v17.7h-2zM703,897.2h4v17.7h-4zM710,897.2h3v17.7h-3zM720,897.2h3v17.7h-3zM726,897.2h2v17.7h-2zM730,897.2h3v17.7h-3zM754,897.2h3v17.7h-3zM759,897.2h1v17.7h-1zM761,897.2h3v17.7h-3zM780,897.2h1v17.7h-1zM784,897.2h1v17.7h-1zM798,897.2h3v17.7h-3zM822,897.2h2v17.7h-2zM826,897.2h2v17.7h-2zM841,897.2h4v17.7h-4zM847,897.2h4v17.7h-4zM854,897.2h4v17.7h-4zM874,897.2h3v17.7h-3zM884,897.2h7v17.7h-7zM898,897.2h3v17.7h-3zM904,897.2h2v17.7h-2zM922,897.2h2v17.7h-2zM926,897.2h3v17.7h-3zM939,897.2h2v17.7h-2zM944,897.2h2v17.7h-2zM948,897.2h2v17.7h-2zM971,897.2h2v17.7h-2zM976,897.2h2v17.7h-2zM991,897.2h5v17.7h-5zM379,916.3h4v17.7h-4zM403,916.3h3v17.7h-3zM407,916.3h1v17.7h-1zM416,916.3h2v17.7h-2zM426,916.3h2v17.7h-2zM429,916.3h2v17.7h-2zM432,916.3h3v17.7h-3zM437,916.3h1v17.7h-1zM448,916.3h3v17.7h-3zM454,916.3h4v17.7h-4zM461,916.3h1v17.7h-1zM465,916.3h1v17.7h-1zM468,916.3h2v17.7h-2zM473,916.3h2v17.7h-2zM478,916.3h1v17.7h-1zM482,916.3h1v17.7h-1zM503,916.3h3v17.7h-3zM513,916.3h3v17.7h-3zM531,916.3h4v17.7h-4zM545,916.3h4v17.7h-4zM556,916.3h5v17.7h-5zM565,916.3h2v17.7h-2zM572,916.3h3v17.7h-3zM582,916.3h7v17.7h-7zM592,916.3h2v17.7h-2zM598,916.3h4v17.7h-4zM603,916.3h2v17.7h-2zM612,916.3h5v17.7h-5zM637,916.3h2v17.7h-2zM651,916.3h2v17.7h-2zM654,916.3h3v17.7h-3zM659,916.3h3v17.7h-3zM682,916.3h1v17.7h-1zM684,916.3h2v17.7h-2zM693,916.3h3v17.7h-3zM699,916.3h2v17.7h-2zM708,916.3h1v17.7h-1zM716,916.3h6v17.7h-6zM742,916.3h2v17.7h-2zM756,916.3h1v17.7h-1zM762,916.3h2v17.7h-2zM772,916.3h3v17.7h-3zM776,916.3h1v17.7h-1zM778,916.3h1v17.7h-1zM789,916.3h2v17.7h-2zM801,916.3h2v17.7h-2zM811,916.3h3v17.7h-3zM815,916.3h4v17.7h-4zM829,916.3h3v17.7h-3zM833,916.3h2v17.7h-2zM838,916.3h3v17.7h-3zM848,916.3h3v17.7h-3zM853,916.3h5v17.7h-5zM873,916.3h4v17.7h-4zM879,916.3h1v17.7h-1zM892,916.3h1v17.7h-1zM908,916.3h1v17.7h-1zM921,916.3h2v17.7h-2zM933,916.3h8v17.7h-8zM956,916.3h5v17.7h-5zM973,916.3h3v17.7h-3zM977,916.3h3v17.7h-3zM981,916.3h2v17.7h-2zM987,916.3h3v17.7h-3zM993,916.3h3v17.7h-3zM998,916.3h3v17.7h-3zM1002,916.3h2v17.7h-2z" fill="#6e2b31" shape-rendering="crispEdges"/><rect x="246" y="800.2" width="762" height="1" fill="#3b3b3b"/><rect x="246" y="819.3" width="762" height="1" fill="#3b3b3b"/><rect x="246" y="838.4" width="762" height="1" fill="#3b3b3b"/><rect x="246" y="857.5" width="762" height="1" fill="#3b3b3b"/><rect x="246" y="876.6" width="762" height="1" fill="#3b3b3b"/><rect x="246" y="895.7" width="762" height="1" fill="#3b3b3b"/><rect x="246" y="914.8" width="762" height="1" fill="#3b3b3b"/><rect x="327" y="781" width="1" height="151" fill="#3b3b3b"/><rect x="1025" y="541" width="14" height="393" fill="#353535"/><rect x="1025.5" y="541.5" width="13.0" height="12.0" fill="#3a3a3a" stroke="#4e4e4e"/><path d="M1032.0,545.4 l4.2,4.2 h-8.4 z" fill="#9a9a9a"/><rect x="1025.5" y="555.5" width="13" height="80" fill="#3c3c3c" stroke="#4e4e4e"/><rect x="1025.5" y="921.5" width="13.0" height="12.0" fill="#3a3a3a" stroke="#4e4e4e"/><path d="M1032.0,929.6 l4.2,-4.2 h-8.4 z" fill="#9a9a9a"/><rect x="1009" y="782" width="13.5" height="151" fill="#353535"/><rect x="1009.5" y="782.5" width="12.5" height="11.5" fill="#3a3a3a" stroke="#4e4e4e"/><path d="M1015.8,786.1 l4.2,4.2 h-8.4 z" fill="#9a9a9a"/><rect x="1009.5" y="795.5" width="12.5" height="123" fill="#3c3c3c" stroke="#4e4e4e"/><rect x="1009.5" y="920.5" width="12.5" height="11.8" fill="#3a3a3a" stroke="#4e4e4e"/><path d="M1015.8,928.5 l4.2,-4.2 h-8.4 z" fill="#9a9a9a"/></svg>
<div class="t" style="left:335.75px;top:783.67px;font-size:12.5px;letter-spacing:0.271px;color:#45191d;">preprocess_function</div>
<div class="t" style="left:561.25px;top:783.67px;font-size:12.5px;letter-spacing:0.271px;color:#45191d;">preprocess_function</div>
<div class="t" style="left:885.05px;top:783.67px;font-size:12.5px;letter-spacing:0.254px;color:#45191d;">preprocess_function</div>

<!-- right -->

<div class="pane" style="left:1048px;top:103px;width:300px;height:833px"></div>
<div class="tab sel" style="left:1048px;top:76px;width:82px;height:28px"><div class="t" style="left:9.40px;top:5.67px;font-size:12.5px;letter-spacing:0.408px;">Properties</div></div>
<div class="pane" style="left:1052px;top:133px;width:292px;height:799px"></div>
<div class="tab" style="left:1176px;top:109px;width:119px;height:24px"><div class="t" style="left:9.20px;top:4.67px;font-size:12.5px;letter-spacing:0.557px;">Node Properties</div></div>
<div class="tab sel" style="left:1052px;top:107px;width:123px;height:27px"><div class="t" style="left:10.08px;top:5.07px;font-size:12.5px;letter-spacing:0.345px;">Graph Properties</div></div>
<div class="abs" style="left:1055px;top:138px;width:286px;height:792px;background:#151515"></div>
<div class="abs" style="left:1055px;top:138px;width:286px;height:19px;background:#383838;border-top:1px solid #2a2a2a;border-bottom:1px solid #2a2a2a"></div>
<div class="abs" style="left:1154px;top:139px;width:1px;height:17px;background:#555"></div>
<div class="t" style="left:1057.50px;top:139.87px;font-size:12.5px;letter-spacing:-0.260px;">Property Name</div>
<div class="t" style="left:1158.20px;top:139.87px;font-size:12.5px;letter-spacing:-0.406px;">Value</div>
<div class="abs" style="left:1055px;top:176px;width:286px;height:19px;background:#2b2b2b"></div>
<div class="abs" style="left:1055px;top:214px;width:286px;height:19px;background:#2b2b2b"></div>
<svg style="left:1055px;top:157px" width="60" height="40"><path d="M6,7 L15,7 L10.5,12.5 Z M26,26 L35,26 L30.5,31.5 Z" fill="#9a9a9a"/></svg>
<div class="t" style="left:1079.20px;top:158.67px;font-size:12.5px;letter-spacing:-0.100px;">g0</div>
<div class="t" style="left:1098.88px;top:177.67px;font-size:12.5px;letter-spacing:-0.250px;">Global</div>
<div class="t" style="left:1118.00px;top:196.67px;font-size:12.5px;letter-spacing:-0.188px;">Nodes</div>
<div class="t" style="left:1159.30px;top:196.67px;font-size:12.5px;">8</div>
<div class="t" style="left:1118.00px;top:215.67px;font-size:12.5px;letter-spacing:-0.781px;">Edges</div>
<div class="t" style="left:1159.30px;top:215.67px;font-size:12.5px;">9</div>
<svg style="left:1044px;top:499px" width="4" height="20"><path d="M1,1h2v2h-2z M1,4h2v2h-2z M1,7h2v2h-2z M1,10h2v2h-2z M1,13h2v2h-2z M1,16h2v2h-2z" fill="#8a8a8a"/></svg>

</body></html>
